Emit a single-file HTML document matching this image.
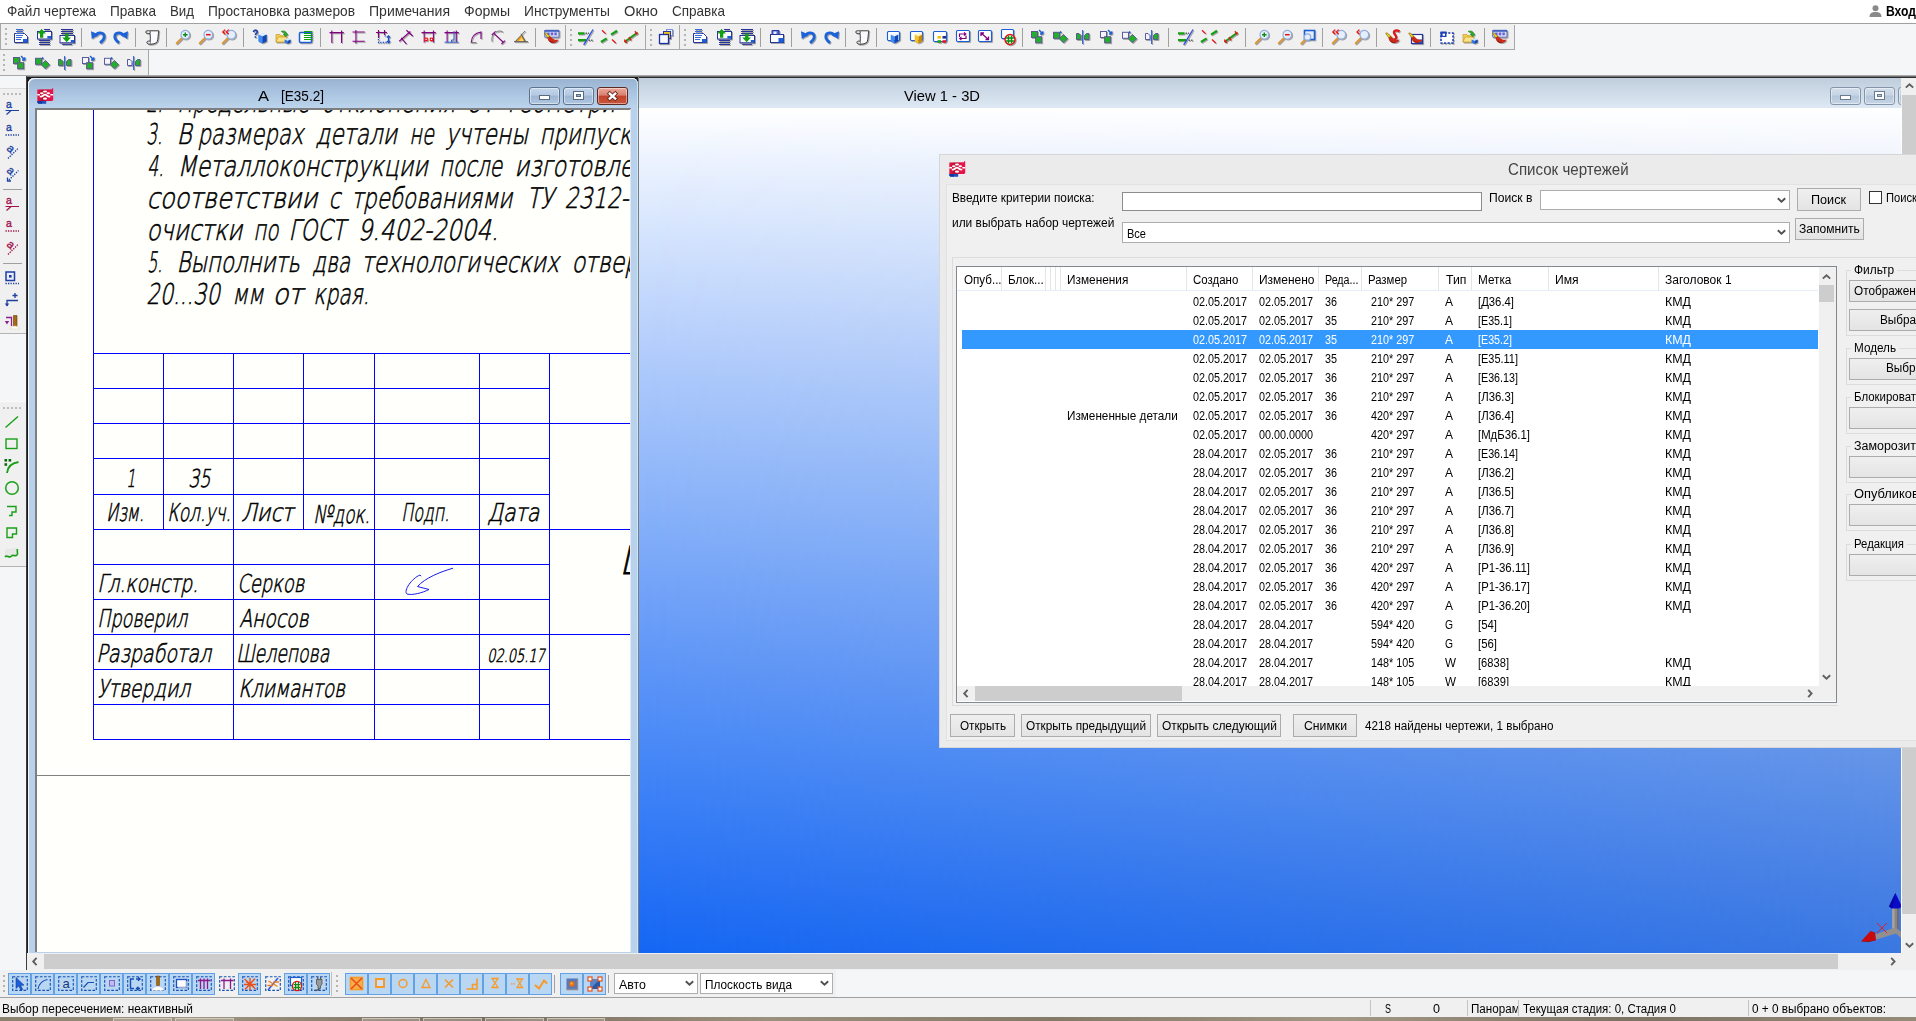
<!DOCTYPE html>
<html lang="ru"><head><meta charset="utf-8"><title>Tekla Structures</title>
<style>
html,body{margin:0;padding:0}
html{overflow:hidden;width:1916px;height:1021px}
body{width:1916px;height:1021px;overflow:hidden;position:relative;background:#f5f6f7;font-family:"Liberation Sans",sans-serif;font-size:12px;color:#000}
.t{position:absolute;white-space:pre}
.a{position:absolute}
svg{position:absolute;overflow:visible}

.ic{filter:drop-shadow(1px 1px .5px rgba(70,70,70,.45))}
.sep{position:absolute;width:1px;background:#a0a0a0}
.grip{position:absolute;width:2px;background-image:repeating-linear-gradient(180deg,#b4b4b4 0 2px,transparent 2px 5px);}
.btn{position:absolute;box-sizing:border-box;border:1px solid #acacac;background:linear-gradient(180deg,#efefef,#e4e4e4);}
.inp{position:absolute;box-sizing:border-box;border:1px solid #7a7a7a;background:#fff}
.grp{position:absolute;box-sizing:border-box;border:1px solid #dcdcdc}

</style></head><body>
<div style="position:absolute;left:0px;top:0px;width:1916px;height:23px;background:#fff"></div>
<div style="position:absolute;left:0px;top:23px;width:1916px;height:1px;background:#a0a0a0"></div>
<div class="t" style="left:7px;top:2.0px;line-height:19px;font:normal normal 15px 'Liberation Sans', sans-serif;transform:scaleX(0.9038);transform-origin:0 50%;color:#333;">Файл чертежа</div>
<div class="t" style="left:110px;top:2.0px;line-height:19px;font:normal normal 15px 'Liberation Sans', sans-serif;transform:scaleX(0.9078);transform-origin:0 50%;color:#333;">Правка</div>
<div class="t" style="left:170px;top:2.0px;line-height:19px;font:normal normal 15px 'Liberation Sans', sans-serif;transform:scaleX(0.8843);transform-origin:0 50%;color:#333;">Вид</div>
<div class="t" style="left:208px;top:2.0px;line-height:19px;font:normal normal 15px 'Liberation Sans', sans-serif;transform:scaleX(0.9146);transform-origin:0 50%;color:#333;">Простановка размеров</div>
<div class="t" style="left:369px;top:2.0px;line-height:19px;font:normal normal 15px 'Liberation Sans', sans-serif;transform:scaleX(0.9352);transform-origin:0 50%;color:#333;">Примечания</div>
<div class="t" style="left:464px;top:2.0px;line-height:19px;font:normal normal 15px 'Liberation Sans', sans-serif;transform:scaleX(0.9352);transform-origin:0 50%;color:#333;">Формы</div>
<div class="t" style="left:524px;top:2.0px;line-height:19px;font:normal normal 15px 'Liberation Sans', sans-serif;transform:scaleX(0.9195);transform-origin:0 50%;color:#333;">Инструменты</div>
<div class="t" style="left:624px;top:2.0px;line-height:19px;font:normal normal 15px 'Liberation Sans', sans-serif;transform:scaleX(0.9753);transform-origin:0 50%;color:#333;">Окно</div>
<div class="t" style="left:672px;top:2.0px;line-height:19px;font:normal normal 15px 'Liberation Sans', sans-serif;transform:scaleX(0.9007);transform-origin:0 50%;color:#333;">Справка</div>
<svg style="left:1869px;top:5px" width="13" height="12" viewBox="0 0 13 12"><circle cx="6.5" cy="3.2" r="3" fill="#8a8a8a"/><path d="M0.5 12 C0.5 8 3 7 6.5 7 S12.5 8 12.5 12Z" fill="#8a8a8a"/></svg>
<div class="t" style="left:1886px;top:2.0px;line-height:19px;font:normal bold 15px 'Liberation Sans', sans-serif;transform:scaleX(0.8088);transform-origin:0 50%;color:#000;">Вход</div>
<div style="position:absolute;left:0px;top:24px;width:1514px;height:26px;background:#f0f0f0"></div>
<div style="position:absolute;left:0px;top:49px;width:1515px;height:1px;background:#a8a8a8"></div>
<div style="position:absolute;left:0px;top:24px;width:1px;height:25px;background:#a8a8a8"></div>
<div style="position:absolute;left:1514px;top:25px;width:1px;height:25px;background:#a8a8a8"></div>
<div style="position:absolute;left:0px;top:50px;width:148px;height:26px;background:#f0f0f0"></div>
<div style="position:absolute;left:148px;top:50px;width:1px;height:26px;background:#a8a8a8"></div>
<div style="position:absolute;left:0px;top:75px;width:1916px;height:1px;background:#a8a8a8"></div>
<div style="position:absolute;left:26px;top:76px;width:1890px;height:1px;background:#6e6e6e"></div>
<div style="position:absolute;left:26px;top:77px;width:1890px;height:1px;background:#2e2e2e"></div>
<div class="grip" style="left:5px;top:28px;height:19px"></div>
<svg class="ic" style="left:13px;top:29px" width="16" height="16" viewBox="0 0 16 16"><path d="M3 0.5H10M3 2.5H10" stroke="#3a6ad8" stroke-width="1"/><path d="M1.5 4.5H11.5L14.5 7.5V13.5H1.5Z" fill="#fff" stroke="#27349a"/><path d="M3 4.5H10M3 6.5H10M3 8.5H9M3 10.5H8" stroke="#3a6ad8" stroke-width="1"/><rect x="10" y="10" width="4.5" height="3.5" fill="#1c5ed6"/></svg>
<svg class="ic" style="left:36px;top:29px" width="16" height="16" viewBox="0 0 16 16"><path d="M8 0.5H14" stroke="#27349a"/><rect x="1.5" y="2.5" width="14" height="7.5" fill="#fff" stroke="#27349a"/><rect x="11.3" y="7" width="3.7" height="2.6" fill="#1c5ed6"/><path d="M3 11.5H14M3 13.5H14M3 15.5H14" stroke="#27349a" stroke-width="1"/><path d="M5.6 0 L10 4.4 H7.3 V8.8 H4 V4.4 H1.3Z" fill="#14a014"/></svg>
<svg class="ic" style="left:59px;top:29px" width="16" height="16" viewBox="0 0 16 16"><path d="M2 0.5H14M2 2.5H14M2 4.5H14M3 15.4H13" stroke="#27349a" stroke-width="1"/><rect x="1" y="6.5" width="14.5" height="7.3" fill="#fff" stroke="#27349a"/><rect x="11.8" y="11" width="3.4" height="2.5" fill="#1c5ed6"/><path d="M7.7 13.2 L12 8.5 H9.5 V4.4 H6.1 V8.5 H3.3Z" fill="#14a014"/></svg>
<div class="sep" style="left:81px;top:28px;height:19px"></div>
<svg class="ic" style="left:90px;top:29px" width="16" height="16" viewBox="0 0 16 16"><path d="M5.6 7.2 C7 2.6 14.4 2.6 14.2 8 C14.1 10.6 12 12.4 10 13.8" fill="none" stroke="#1c62d8" stroke-width="2.8"/><path d="M1 2.2 L8.8 5.6 L1.8 10Z" fill="#1c62d8"/></svg>
<svg class="ic" style="left:113px;top:29px" width="16" height="16" viewBox="0 0 16 16"><g transform="translate(16 0) scale(-1 1)"><path d="M5.6 7.2 C7 2.6 14.4 2.6 14.2 8 C14.1 10.6 12 12.4 10 13.8" fill="none" stroke="#1c62d8" stroke-width="2.8"/><path d="M1 2.2 L8.8 5.6 L1.8 10Z" fill="#1c62d8"/></g></svg>
<div class="sep" style="left:135px;top:28px;height:19px"></div>
<svg class="ic" style="left:144px;top:29px" width="16" height="16" viewBox="0 0 16 16"><path d="M5.5 1.8 H14.8 C14 5.5 14.3 10 13.2 12.6 C11.8 15 8.5 15.2 5.8 15.2 C6.6 12 6.3 6 6 4.2 C4 4.6 1.6 4.4 1.6 3 C1.6 1.8 4 1.7 5.5 1.8Z" fill="#fafbff" stroke="#3c3c3c" stroke-width="1"/><path d="M6.1 12.4 C5 11.8 3.2 12 2.8 13.2 C2.8 14.8 4.8 15.2 5.8 15.2" fill="#e8e8ee" stroke="#3c3c3c" stroke-width="1"/><path d="M6 4.2 C6.6 3.6 6.4 2.4 5.5 1.8" fill="none" stroke="#3c3c3c" stroke-width=".9"/></svg>
<div class="sep" style="left:166px;top:28px;height:19px"></div>
<svg class="ic" style="left:175px;top:29px" width="16" height="16" viewBox="0 0 16 16"><path d="M7.3 8.8 L1.8 14.3" stroke="#d9963a" stroke-width="2.2" stroke-linecap="round"/><circle cx="10.3" cy="5.7" r="4.3" fill="#e4effc" stroke="#93aede" stroke-width="1.2"/><path d="M8 5.7H12.6M10.3 3.4V8" stroke="#108a10" stroke-width="1.4"/></svg>
<svg class="ic" style="left:198px;top:29px" width="16" height="16" viewBox="0 0 16 16"><path d="M7.3 8.8 L1.8 14.3" stroke="#d9963a" stroke-width="2.2" stroke-linecap="round"/><circle cx="10.3" cy="5.7" r="4.3" fill="#e4effc" stroke="#93aede" stroke-width="1.2"/><path d="M8 5.7H12.6" stroke="#e01010" stroke-width="1.5"/></svg>
<svg class="ic" style="left:221px;top:29px" width="16" height="16" viewBox="0 0 16 16"><path d="M7.3 8.8 L1.8 14.3" stroke="#d9963a" stroke-width="2.2" stroke-linecap="round"/><circle cx="10.3" cy="5.7" r="4.3" fill="#e4effc" stroke="#93aede" stroke-width="1.2"/><path d="M4.2 0.6L1.8 2.9L4.2 5.2M7.8 0.6L5.4 2.9L7.8 5.2" stroke="#f01010" stroke-width="1.3" fill="none"/></svg>
<div class="sep" style="left:243px;top:28px;height:19px"></div>
<svg class="ic" style="left:252px;top:29px" width="16" height="16" viewBox="0 0 16 16"><path d="M1.5 3 C1.5 0.6 5.3 0.6 5.3 2.8 C5.3 4.4 3.4 4.4 3.4 6" fill="none" stroke="#1c3fa8" stroke-width="1.6"/><rect x="2.6" y="7.2" width="1.6" height="1.6" fill="#1c3fa8"/><path d="M10.5 3.3999999999999995 L14.7 5.5 L10.5 7.6 L6.3 5.5Z" fill="#dcebff"/><path d="M6.3 5.5 L10.5 7.6 L10.5 14.6 L6.3 12.5Z" fill="#3d8af2"/><path d="M14.7 5.5 L10.5 7.6 L10.5 14.6 L14.7 12.5Z" fill="#0f45b8"/></svg>
<svg class="ic" style="left:275px;top:29px" width="16" height="16" viewBox="0 0 16 16"><path d="M1 5.5 H5 L6 6.8 H10.5 V13 H1Z" fill="#f4cf58" stroke="#c89a20" stroke-width=".7"/><path d="M1 13 L3 8 H12 L10.5 13Z" fill="#fbe38a" stroke="#c89a20" stroke-width=".7"/><path d="M6 2.5 C9 1 11.5 2.5 11.5 5 L13 5 L10.6 7.8 L8.2 5 L9.8 5 C9.6 3.6 8 3 6 2.5Z" fill="#2bb02b" stroke="#0e7a0e" stroke-width=".5"/><path d="M12.6 9.0 L15.6 10.5 L12.6 12 L9.6 10.5Z" fill="#cfe4ff"/><path d="M9.6 10.5 L12.6 12 L12.6 15 L9.6 13.5Z" fill="#2a78ee"/><path d="M15.6 10.5 L12.6 12 L12.6 15 L15.6 13.5Z" fill="#0f45b8"/></svg>
<svg class="ic" style="left:298px;top:29px" width="16" height="16" viewBox="0 0 16 16"><rect x="1.5" y="3.5" width="12" height="10" rx="1" fill="#fff" stroke="#1c5ed6" stroke-width="1.5"/><path d="M6 2.5H14.5M6 4.5H14.5M6 6.5H14.5M6 8.5H14.5M6 10.5H14.5" stroke="#12a012" stroke-width="1.1"/></svg>
<div class="sep" style="left:320px;top:28px;height:19px"></div>
<svg class="ic" style="left:329px;top:29px" width="16" height="16" viewBox="0 0 16 16"><path d="M2.8 1.5V14M12.5 1.5V14M0.5 3.6H14.8" stroke="#800080" stroke-width="1.05" fill="none"/></svg>
<svg class="ic" style="left:352px;top:29px" width="16" height="16" viewBox="0 0 16 16"><path d="M0.5 3H12.8M0.5 12.2H12.8M3.9 1V14.5" stroke="#800080" stroke-width="1.05" fill="none"/></svg>
<svg class="ic" style="left:375px;top:29px" width="16" height="16" viewBox="0 0 16 16"><path d="M3.5 1V9M9.5 1V6M1 3.5H12" stroke="#800080" stroke-width="1.1" fill="none"/><path d="M3.5 10V13.5H12" stroke="#1c4fc8" stroke-width="1.3" stroke-dasharray="1.3 1.3" fill="none"/><path d="M13.5 7V13M12 8.5L13.5 6.8L15 8.5M12 12L13.5 13.8L15 12" stroke="#1c4fc8" stroke-width="1.2" fill="none"/><path d="M9.5 7H12" stroke="#1c4fc8" stroke-width="1.2" stroke-dasharray="1.2 1.2"/></svg>
<svg class="ic" style="left:398px;top:29px" width="16" height="16" viewBox="0 0 16 16"><path d="M1.2 12.2L12.4 2.5M8.4 1.3L14.7 7M3.2 8.8L8.4 15" stroke="#800080" stroke-width="1.15" fill="none"/></svg>
<svg class="ic" style="left:421px;top:29px" width="16" height="16" viewBox="0 0 16 16"><path d="M3.2 1.5V13.5M12.4 1.5V13.5M0.5 3.6H14.8" stroke="#800080" stroke-width="1.05" fill="none"/><rect x="3.9" y="9.2" width="2.4" height="2.4" fill="#fff" stroke="#ee1010" stroke-width="1.1"/><rect x="9.3" y="9.2" width="2.4" height="2.4" fill="#fff" stroke="#ee1010" stroke-width="1.1"/></svg>
<svg class="ic" style="left:444px;top:29px" width="16" height="16" viewBox="0 0 16 16"><path d="M3.1 1.5V13M12.3 1.5V13M0.5 3.6H14.8" stroke="#800080" stroke-width="1.05" fill="none"/><path d="M0.5 13.2H14.5M7.5 13V11H10V2" stroke="#2a5fd0" stroke-width="1" fill="none"/></svg>
<svg class="ic" style="left:467px;top:29px" width="16" height="16" viewBox="0 0 16 16"><path d="M4.3 13.4C4.5 8 8 4 14 3V10" stroke="#800080" stroke-width="1.15" fill="none"/><path d="M3.5 13.6H9.5" stroke="#777" stroke-width="1"/></svg>
<svg class="ic" style="left:490px;top:29px" width="16" height="16" viewBox="0 0 16 16"><path d="M3.6 4.2L13.4 13.4M1.8 6L5.6 2.4M11.4 15L15 11.6" stroke="#800080" stroke-width="1.15" fill="none"/><path d="M2 12.5C1.5 8.5 2.5 6 4 4.6M6 3C8.5 1.6 11 1.8 13 3" stroke="#777" stroke-width="1" fill="none"/></svg>
<svg class="ic" style="left:513px;top:29px" width="16" height="16" viewBox="0 0 16 16"><path d="M2.5 12.2L8.8 5.9L12.2 12.2Z" fill="#ee9a18"/><path d="M5.5 12.2L8.8 8.6L10.6 12.2Z" fill="#fbd868"/><path d="M1 12.7H15M2 12.8L12.2 2M8 4.8L12.6 12.8" stroke="#5a5a5a" stroke-width="1" fill="none"/></svg>
<div class="sep" style="left:535px;top:28px;height:19px"></div>
<svg class="ic" style="left:544px;top:29px" width="16" height="16" viewBox="0 0 16 16"><rect x="0.7" y="1.2" width="14.3" height="7" rx=".8" fill="#d4daf4" stroke="#6a7ab8" stroke-width="1.1"/><path d="M0.7 2H15" stroke="#2a50c0" stroke-width="1.4"/><path d="M3.2 3.6H5.6V6.2H3.2ZM6.8 3.6H9.2V6.2H6.8ZM10.4 3.6H12.8V6.2H10.4Z" fill="#6a60d8"/><path d="M3.4 8.6 C4 13 8 15 11.5 13.6 C13 12.9 14 11.9 14.6 10.5 C12.5 11.2 10 10.8 8.5 9.6 C7.4 8.7 6.4 7.6 5.6 6.8Z" fill="#cc2a1a"/><path d="M4 10.6 C5.5 13.8 9 14.8 12 13.3 C9 13.9 6 12.8 4 10.6Z" fill="#8a100a"/><path d="M0.6 4.2 L2 3.8 L5.8 7.2 L3.8 8.8Z" fill="#f4dc10" stroke="#5a4600" stroke-width=".5"/></svg>
<div class="sep" style="left:565px;top:25px;height:24px;background:#a8a8a8"></div>
<div class="grip" style="left:570px;top:29px;height:19px"></div>
<svg class="ic" style="left:577px;top:29px" width="16" height="16" viewBox="0 0 16 16"><path d="M1 4.3H7.5M1 11.2H9" stroke="#12a012" stroke-width="2.3"/><path d="M6.7 15.8 L16 0.5" stroke="#2a4fe0" stroke-width="1.3"/><path d="M8.5 4.3H12M11.5 11.2H15.5" stroke="#666" stroke-width="1.6" stroke-dasharray="1.5 1"/></svg>
<svg class="ic" style="left:600px;top:29px" width="16" height="16" viewBox="0 0 16 16"><path d="M2 1.3L5.5 4.6M12 10.5L15.7 14" stroke="#e81818" stroke-width="1.2"/><path d="M1 13L6.7 9.3M11 5.6L17 1.8" stroke="#12a012" stroke-width="2.2"/></svg>
<svg class="ic" style="left:623px;top:29px" width="16" height="16" viewBox="0 0 16 16"><path d="M1.5 13 L14.5 3.5" stroke="#12a012" stroke-width="2"/><path d="M1.5 10.5L3.5 14M6 8L8 11.3M12 2L14 5.5" stroke="#e81818" stroke-width="1.3"/><circle cx="2.5" cy="12.3" r="1.2" fill="#e81818"/><circle cx="13.3" cy="4.3" r="1.2" fill="#e81818"/><circle cx="7" cy="9.5" r="1" fill="#e81818"/></svg>
<div class="sep" style="left:645px;top:25px;height:24px;background:#a8a8a8"></div>
<div class="grip" style="left:650px;top:29px;height:19px"></div>
<svg class="ic" style="left:658px;top:29px" width="16" height="16" viewBox="0 0 16 16"><rect x="8.5" y="0.5" width="6" height="6" fill="#e8eefc" stroke="#7a90d8"/><rect x="5.5" y="2.5" width="7" height="7" fill="#f2c21a" stroke="#2a3a9a"/><rect x="1.5" y="5.5" width="9" height="9" fill="#f6f8ff" stroke="#1c2f9a" stroke-width="1.3"/></svg>
<div class="sep" style="left:679px;top:25px;height:24px;background:#a8a8a8"></div>
<div class="grip" style="left:684px;top:29px;height:19px"></div>
<svg class="ic" style="left:692px;top:29px" width="16" height="16" viewBox="0 0 16 16"><path d="M3 0.5H10M3 2.5H10" stroke="#3a6ad8" stroke-width="1"/><path d="M1.5 4.5H11.5L14.5 7.5V13.5H1.5Z" fill="#fff" stroke="#27349a"/><path d="M3 4.5H10M3 6.5H10M3 8.5H9M3 10.5H8" stroke="#3a6ad8" stroke-width="1"/><rect x="10" y="10" width="4.5" height="3.5" fill="#1c5ed6"/></svg>
<svg class="ic" style="left:716px;top:29px" width="16" height="16" viewBox="0 0 16 16"><path d="M8 0.5H14" stroke="#27349a"/><rect x="1.5" y="2.5" width="14" height="7.5" fill="#fff" stroke="#27349a"/><rect x="11.3" y="7" width="3.7" height="2.6" fill="#1c5ed6"/><path d="M3 11.5H14M3 13.5H14M3 15.5H14" stroke="#27349a" stroke-width="1"/><path d="M5.6 0 L10 4.4 H7.3 V8.8 H4 V4.4 H1.3Z" fill="#14a014"/></svg>
<svg class="ic" style="left:739px;top:29px" width="16" height="16" viewBox="0 0 16 16"><path d="M2 0.5H14M2 2.5H14M2 4.5H14M3 15.4H13" stroke="#27349a" stroke-width="1"/><rect x="1" y="6.5" width="14.5" height="7.3" fill="#fff" stroke="#27349a"/><rect x="11.8" y="11" width="3.4" height="2.5" fill="#1c5ed6"/><path d="M7.7 13.2 L12 8.5 H9.5 V4.4 H6.1 V8.5 H3.3Z" fill="#14a014"/></svg>
<div class="sep" style="left:760px;top:28px;height:19px"></div>
<svg class="ic" style="left:769px;top:29px" width="16" height="16" viewBox="0 0 16 16"><path d="M3 1.5H10V6.5H3Z" fill="#5a68d8" stroke="#27349a"/><rect x="4.5" y="2.5" width="3" height="3" fill="#e8ecff"/><rect x="1.5" y="5.5" width="13" height="8" fill="#fff" stroke="#27349a"/><rect x="9.5" y="9" width="5" height="4.5" fill="#1c5ed6"/></svg>
<div class="sep" style="left:791px;top:28px;height:19px"></div>
<svg class="ic" style="left:800px;top:29px" width="16" height="16" viewBox="0 0 16 16"><path d="M5.6 7.2 C7 2.6 14.4 2.6 14.2 8 C14.1 10.6 12 12.4 10 13.8" fill="none" stroke="#1c62d8" stroke-width="2.8"/><path d="M1 2.2 L8.8 5.6 L1.8 10Z" fill="#1c62d8"/></svg>
<svg class="ic" style="left:824px;top:29px" width="16" height="16" viewBox="0 0 16 16"><g transform="translate(16 0) scale(-1 1)"><path d="M5.6 7.2 C7 2.6 14.4 2.6 14.2 8 C14.1 10.6 12 12.4 10 13.8" fill="none" stroke="#1c62d8" stroke-width="2.8"/><path d="M1 2.2 L8.8 5.6 L1.8 10Z" fill="#1c62d8"/></g></svg>
<div class="sep" style="left:845px;top:28px;height:19px"></div>
<svg class="ic" style="left:854px;top:29px" width="16" height="16" viewBox="0 0 16 16"><path d="M5.5 1.8 H14.8 C14 5.5 14.3 10 13.2 12.6 C11.8 15 8.5 15.2 5.8 15.2 C6.6 12 6.3 6 6 4.2 C4 4.6 1.6 4.4 1.6 3 C1.6 1.8 4 1.7 5.5 1.8Z" fill="#fafbff" stroke="#3c3c3c" stroke-width="1"/><path d="M6.1 12.4 C5 11.8 3.2 12 2.8 13.2 C2.8 14.8 4.8 15.2 5.8 15.2" fill="#e8e8ee" stroke="#3c3c3c" stroke-width="1"/><path d="M6 4.2 C6.6 3.6 6.4 2.4 5.5 1.8" fill="none" stroke="#3c3c3c" stroke-width=".9"/></svg>
<div class="sep" style="left:876px;top:28px;height:19px"></div>
<svg class="ic" style="left:886px;top:29px" width="16" height="16" viewBox="0 0 16 16"><rect x="1.5" y="2.5" width="12" height="9" rx="1" fill="#fff" stroke="#1c5ed6" stroke-width="1.15"/><path d="M8.5 3.7 L12.3 5.6 L8.5 7.5 L4.7 5.6Z" fill="#eef5ff"/><path d="M4.7 5.6 L8.5 7.5 L8.5 14.5 L4.7 12.6Z" fill="#3d8af2"/><path d="M12.3 5.6 L8.5 7.5 L8.5 14.5 L12.3 12.6Z" fill="#0f45b8"/></svg>
<svg class="ic" style="left:909px;top:29px" width="16" height="16" viewBox="0 0 16 16"><rect x="1.5" y="2.5" width="12" height="9" rx="1" fill="#fff" stroke="#1c5ed6" stroke-width="1.15"/><path d="M9.5 3.7 L13.3 5.6 L9.5 7.5 L5.7 5.6Z" fill="#fff6c8"/><path d="M5.7 5.6 L9.5 7.5 L9.5 14.5 L5.7 12.6Z" fill="#f5c02a"/><path d="M13.3 5.6 L9.5 7.5 L9.5 14.5 L13.3 12.6Z" fill="#c88a08"/></svg>
<svg class="ic" style="left:932px;top:29px" width="16" height="16" viewBox="0 0 16 16"><rect x="1.5" y="2.5" width="13" height="10" rx="1" fill="#fff" stroke="#1c5ed6" stroke-width="1.15"/><rect x="5.5" y="7" width="3.5" height="2.6" fill="#f2c000"/><rect x="10.5" y="7" width="3.5" height="2.6" fill="#1c2f9a"/><rect x="5.5" y="11.2" width="3.5" height="2.6" fill="#14a014"/><rect x="10.5" y="11.2" width="3.5" height="2.6" fill="#e8102a"/></svg>
<svg class="ic" style="left:955px;top:29px" width="16" height="16" viewBox="0 0 16 16"><rect x="1.5" y="1.5" width="13" height="11" rx="1" fill="#fff" stroke="#1c5ed6" stroke-width="1.15"/><path d="M4.5 8V5H10.5M9 3.4L10.8 5L9 6.6M11 6.5V9.5H5M6.5 7.9L4.7 9.5L6.5 11.1" stroke="#800080" stroke-width="1.2" fill="none"/></svg>
<svg class="ic" style="left:977px;top:29px" width="16" height="16" viewBox="0 0 16 16"><rect x="1.5" y="1.5" width="13" height="11" rx="1" fill="#fff" stroke="#1c5ed6" stroke-width="1.15"/><path d="M4 4 L11.5 10.5M4 7V4H7M8.5 10.5H11.5V7.5" stroke="#800080" stroke-width="1.3" fill="none"/></svg>
<svg class="ic" style="left:1000px;top:29px" width="16" height="16" viewBox="0 0 16 16"><rect x="1.5" y="0.5" width="12" height="9" rx="1" fill="#fff" stroke="#1c5ed6" stroke-width="1.15"/><circle cx="10" cy="10.5" r="5" fill="#fff" stroke="#e01010" stroke-width="1.4"/><path d="M6 9H14M6 12H14M8.5 6.5V14.5M11.5 6.5V14.5" stroke="#108a10" stroke-width="1.5"/></svg>
<div class="sep" style="left:1022px;top:28px;height:19px"></div>
<svg class="ic" style="left:1031px;top:29px" width="16" height="16" viewBox="0 0 16 16"><rect x="0.5" y="2.5" width="6" height="6" fill="#22b02a" stroke="#5a5a8c" stroke-width="1"/><rect x="4.6" y="7.7" width="6" height="6" fill="#22b02a" stroke="#5a5a8c" stroke-width="1"/><path d="M8 1 L11.6 4.8 M11.8 5 L11.8 2.2 M11.8 5 L9 5" stroke="#1c5ed6" stroke-width="1.3" fill="none"/></svg>
<svg class="ic" style="left:1054px;top:29px" width="16" height="16" viewBox="0 0 16 16"><rect x="-0.5" y="3.3" width="6" height="6" fill="#22b02a" stroke="#5a5a8c" stroke-width="1"/><path d="M9.4 5.3999999999999995 L13.600000000000001 9.6 L9.4 13.8 L5.2 9.6Z" fill="#22b02a" stroke="#5a5a8c" stroke-width="1"/><path d="M6 1.8L8 3.2L6 4.6Z" fill="#1c5ed6"/></svg>
<svg class="ic" style="left:1077px;top:29px" width="16" height="16" viewBox="0 0 16 16"><path d="M-0.5 4.5H2L4 6.5V10.5H-0.5Z" fill="#22b02a" stroke="#5a5a8c"/><path d="M12 4.5H9.5L7.5 6.5V10.5H12Z" fill="#22b02a" stroke="#5a5a8c"/><path d="M5.6 1V15" stroke="#2a60e0" stroke-width="1.1"/></svg>
<svg class="ic" style="left:1100px;top:29px" width="16" height="16" viewBox="0 0 16 16"><rect x="0.5" y="2.5" width="6" height="6" fill="#f4f4fa" stroke="#5a5a9c" stroke-width="1"/><rect x="4.6" y="7.7" width="6" height="6" fill="#22b02a" stroke="#5a5a8c" stroke-width="1"/><path d="M8 1 L11.6 4.8 M11.8 5 L11.8 2.2 M11.8 5 L9 5" stroke="#1c5ed6" stroke-width="1.3" fill="none"/></svg>
<svg class="ic" style="left:1123px;top:29px" width="16" height="16" viewBox="0 0 16 16"><rect x="-0.5" y="3.3" width="6" height="6" fill="#f4f4fa" stroke="#5a5a9c" stroke-width="1"/><path d="M9.4 5.3999999999999995 L13.600000000000001 9.6 L9.4 13.8 L5.2 9.6Z" fill="#22b02a" stroke="#5a5a8c" stroke-width="1"/><path d="M6 1.8L8 3.2L6 4.6Z" fill="#1c5ed6"/></svg>
<svg class="ic" style="left:1146px;top:29px" width="16" height="16" viewBox="0 0 16 16"><path d="M-0.5 4.5H2L4 6.5V10.5H-0.5Z" fill="#f4f4fa" stroke="#5a5a9c"/><path d="M12 4.5H9.5L7.5 6.5V10.5H12Z" fill="#22b02a" stroke="#5a5a8c"/><path d="M5.6 1V15" stroke="#2a60e0" stroke-width="1.1"/></svg>
<div class="sep" style="left:1168px;top:28px;height:19px"></div>
<svg class="ic" style="left:1177px;top:29px" width="16" height="16" viewBox="0 0 16 16"><path d="M1 4.3H7.5M1 11.2H9" stroke="#12a012" stroke-width="2.3"/><path d="M6.7 15.8 L16 0.5" stroke="#2a4fe0" stroke-width="1.3"/><path d="M8.5 4.3H12M11.5 11.2H15.5" stroke="#666" stroke-width="1.6" stroke-dasharray="1.5 1"/></svg>
<svg class="ic" style="left:1200px;top:29px" width="16" height="16" viewBox="0 0 16 16"><path d="M2 1.3L5.5 4.6M12 10.5L15.7 14" stroke="#e81818" stroke-width="1.2"/><path d="M1 13L6.7 9.3M11 5.6L17 1.8" stroke="#12a012" stroke-width="2.2"/></svg>
<svg class="ic" style="left:1223px;top:29px" width="16" height="16" viewBox="0 0 16 16"><path d="M1.5 13 L14.5 3.5" stroke="#12a012" stroke-width="2"/><path d="M1.5 10.5L3.5 14M6 8L8 11.3M12 2L14 5.5" stroke="#e81818" stroke-width="1.3"/><circle cx="2.5" cy="12.3" r="1.2" fill="#e81818"/><circle cx="13.3" cy="4.3" r="1.2" fill="#e81818"/><circle cx="7" cy="9.5" r="1" fill="#e81818"/></svg>
<div class="sep" style="left:1245px;top:28px;height:19px"></div>
<svg class="ic" style="left:1254px;top:29px" width="16" height="16" viewBox="0 0 16 16"><path d="M7.3 8.8 L1.8 14.3" stroke="#d9963a" stroke-width="2.2" stroke-linecap="round"/><circle cx="10.3" cy="5.7" r="4.3" fill="#e4effc" stroke="#93aede" stroke-width="1.2"/><path d="M8 5.7H12.6M10.3 3.4V8" stroke="#108a10" stroke-width="1.4"/></svg>
<svg class="ic" style="left:1277px;top:29px" width="16" height="16" viewBox="0 0 16 16"><path d="M7.3 8.8 L1.8 14.3" stroke="#d9963a" stroke-width="2.2" stroke-linecap="round"/><circle cx="10.3" cy="5.7" r="4.3" fill="#e4effc" stroke="#93aede" stroke-width="1.2"/><path d="M8 5.7H12.6" stroke="#e01010" stroke-width="1.5"/></svg>
<svg class="ic" style="left:1300px;top:29px" width="16" height="16" viewBox="0 0 16 16"><rect x="4.5" y="1.5" width="10" height="9" fill="#e4ecfa" stroke="#1c5ed6" stroke-width="1.6"/><path d="M5.5 10.5 L1.5 14.5" stroke="#d9963a" stroke-width="2.2" stroke-linecap="round"/><circle cx="7.5" cy="8" r="3.2" fill="#e4effc" stroke="#93aede" stroke-width="1.2"/></svg>
<div class="sep" style="left:1322px;top:28px;height:19px"></div>
<svg class="ic" style="left:1331px;top:29px" width="16" height="16" viewBox="0 0 16 16"><path d="M7.3 8.8 L1.8 14.3" stroke="#d9963a" stroke-width="2.2" stroke-linecap="round"/><circle cx="10.3" cy="5.7" r="4.3" fill="#e4effc" stroke="#93aede" stroke-width="1.2"/><path d="M4.2 0.6L1.8 2.9L4.2 5.2M7.8 0.6L5.4 2.9L7.8 5.2" stroke="#f01010" stroke-width="1.3" fill="none"/></svg>
<svg class="ic" style="left:1354px;top:29px" width="16" height="16" viewBox="0 0 16 16"><path d="M7.3 8.8 L1.8 14.3" stroke="#d9963a" stroke-width="2.2" stroke-linecap="round"/><circle cx="10.3" cy="5.7" r="4.3" fill="#e4effc" stroke="#93aede" stroke-width="1.2"/><path d="M5.4 0.6L3 2.9L5.4 5.2" stroke="#f01010" stroke-width="1.3" fill="none"/></svg>
<div class="sep" style="left:1376px;top:28px;height:19px"></div>
<svg class="ic" style="left:1385px;top:29px" width="16" height="16" viewBox="0 0 16 16"><path d="M14.5 2.5 C11 0 7.5 2 9.5 5 C11.5 7.5 12.5 9 9 11" fill="none" stroke="#e01414" stroke-width="2.2"/><path d="M3.4 8.6 C4 13 8 15 11.5 13.6 C13 12.9 14 11.9 14.6 10.5 C12.5 11.2 10 10.8 8.5 9.6 C7.4 8.7 6.4 7.6 5.6 6.8Z" fill="#cc2a1a"/><path d="M4 10.6 C5.5 13.8 9 14.8 12 13.3 C9 13.9 6 12.8 4 10.6Z" fill="#8a100a"/><path d="M0.6 4.2 L2 3.8 L5.8 7.2 L3.8 8.8Z" fill="#f4dc10" stroke="#5a4600" stroke-width=".5"/></svg>
<svg class="ic" style="left:1408px;top:29px" width="16" height="16" viewBox="0 0 16 16"><rect x="3.5" y="5.5" width="11" height="9" fill="#fff" stroke="#27349a" stroke-width="1.2"/><rect x="10" y="10.5" width="4" height="3.5" fill="#1c5ed6"/><path d="M3.4 8.6 C4 13 8 15 11.5 13.6 C13 12.9 14 11.9 14.6 10.5 C12.5 11.2 10 10.8 8.5 9.6 C7.4 8.7 6.4 7.6 5.6 6.8Z" fill="#cc2a1a"/><path d="M4 10.6 C5.5 13.8 9 14.8 12 13.3 C9 13.9 6 12.8 4 10.6Z" fill="#8a100a"/><path d="M0.6 4.2 L2 3.8 L5.8 7.2 L3.8 8.8Z" fill="#f4dc10" stroke="#5a4600" stroke-width=".5"/></svg>
<div class="sep" style="left:1430px;top:28px;height:19px"></div>
<svg class="ic" style="left:1439px;top:29px" width="16" height="16" viewBox="0 0 16 16"><rect x="2" y="4" width="12" height="10" fill="#fff" stroke="#1c3fb8" stroke-width="1.6" stroke-dasharray="2.2 1.4"/><path d="M1.5 2.5H7.5V8H1.5Z" fill="#1c3fb8"/><rect x="3.6" y="4.6" width="2.4" height="2.2" fill="#fff"/></svg>
<svg class="ic" style="left:1462px;top:29px" width="16" height="16" viewBox="0 0 16 16"><path d="M1 5.5 H5 L6 6.8 H10.5 V13 H1Z" fill="#f4cf58" stroke="#c89a20" stroke-width=".7"/><path d="M1 13 L3 8 H12 L10.5 13Z" fill="#fbe38a" stroke="#c89a20" stroke-width=".7"/><path d="M6 2.5 C9 1 11.5 2.5 11.5 5 L13 5 L10.6 7.8 L8.2 5 L9.8 5 C9.6 3.6 8 3 6 2.5Z" fill="#2bb02b" stroke="#0e7a0e" stroke-width=".5"/><path d="M12.6 9.0 L15.6 10.5 L12.6 12 L9.6 10.5Z" fill="#cfe4ff"/><path d="M9.6 10.5 L12.6 12 L12.6 15 L9.6 13.5Z" fill="#2a78ee"/><path d="M15.6 10.5 L12.6 12 L12.6 15 L15.6 13.5Z" fill="#0f45b8"/></svg>
<div class="sep" style="left:1484px;top:28px;height:19px"></div>
<svg class="ic" style="left:1492px;top:29px" width="16" height="16" viewBox="0 0 16 16"><rect x="0.7" y="1.2" width="14.3" height="7" rx=".8" fill="#d4daf4" stroke="#6a7ab8" stroke-width="1.1"/><path d="M0.7 2H15" stroke="#2a50c0" stroke-width="1.4"/><path d="M3.2 3.6H5.6V6.2H3.2ZM6.8 3.6H9.2V6.2H6.8ZM10.4 3.6H12.8V6.2H10.4Z" fill="#6a60d8"/><path d="M3.4 8.6 C4 13 8 15 11.5 13.6 C13 12.9 14 11.9 14.6 10.5 C12.5 11.2 10 10.8 8.5 9.6 C7.4 8.7 6.4 7.6 5.6 6.8Z" fill="#cc2a1a"/><path d="M4 10.6 C5.5 13.8 9 14.8 12 13.3 C9 13.9 6 12.8 4 10.6Z" fill="#8a100a"/><path d="M0.6 4.2 L2 3.8 L5.8 7.2 L3.8 8.8Z" fill="#f4dc10" stroke="#5a4600" stroke-width=".5"/></svg>
<div class="grip" style="left:3px;top:54px;height:19px"></div>
<svg class="ic" style="left:13px;top:55px" width="16" height="16" viewBox="0 0 16 16"><rect x="0.5" y="2.5" width="6" height="6" fill="#22b02a" stroke="#5a5a8c" stroke-width="1"/><rect x="4.6" y="7.7" width="6" height="6" fill="#22b02a" stroke="#5a5a8c" stroke-width="1"/><path d="M8 1 L11.6 4.8 M11.8 5 L11.8 2.2 M11.8 5 L9 5" stroke="#1c5ed6" stroke-width="1.3" fill="none"/></svg>
<svg class="ic" style="left:36px;top:55px" width="16" height="16" viewBox="0 0 16 16"><rect x="-0.5" y="3.3" width="6" height="6" fill="#22b02a" stroke="#5a5a8c" stroke-width="1"/><path d="M9.4 5.3999999999999995 L13.600000000000001 9.6 L9.4 13.8 L5.2 9.6Z" fill="#22b02a" stroke="#5a5a8c" stroke-width="1"/><path d="M6 1.8L8 3.2L6 4.6Z" fill="#1c5ed6"/></svg>
<svg class="ic" style="left:59px;top:55px" width="16" height="16" viewBox="0 0 16 16"><path d="M-0.5 4.5H2L4 6.5V10.5H-0.5Z" fill="#22b02a" stroke="#5a5a8c"/><path d="M12 4.5H9.5L7.5 6.5V10.5H12Z" fill="#22b02a" stroke="#5a5a8c"/><path d="M5.6 1V15" stroke="#2a60e0" stroke-width="1.1"/></svg>
<svg class="ic" style="left:82px;top:55px" width="16" height="16" viewBox="0 0 16 16"><rect x="0.5" y="2.5" width="6" height="6" fill="#f4f4fa" stroke="#5a5a9c" stroke-width="1"/><rect x="4.6" y="7.7" width="6" height="6" fill="#22b02a" stroke="#5a5a8c" stroke-width="1"/><path d="M8 1 L11.6 4.8 M11.8 5 L11.8 2.2 M11.8 5 L9 5" stroke="#1c5ed6" stroke-width="1.3" fill="none"/></svg>
<svg class="ic" style="left:105px;top:55px" width="16" height="16" viewBox="0 0 16 16"><rect x="-0.5" y="3.3" width="6" height="6" fill="#f4f4fa" stroke="#5a5a9c" stroke-width="1"/><path d="M9.4 5.3999999999999995 L13.600000000000001 9.6 L9.4 13.8 L5.2 9.6Z" fill="#22b02a" stroke="#5a5a8c" stroke-width="1"/><path d="M6 1.8L8 3.2L6 4.6Z" fill="#1c5ed6"/></svg>
<svg class="ic" style="left:128px;top:55px" width="16" height="16" viewBox="0 0 16 16"><path d="M-0.5 4.5H2L4 6.5V10.5H-0.5Z" fill="#f4f4fa" stroke="#5a5a9c"/><path d="M12 4.5H9.5L7.5 6.5V10.5H12Z" fill="#22b02a" stroke="#5a5a8c"/><path d="M5.6 1V15" stroke="#2a60e0" stroke-width="1.1"/></svg>
<div style="position:absolute;left:0px;top:88px;width:26px;height:246px;background:#f0f0f0"></div>
<div style="position:absolute;left:0px;top:402px;width:26px;height:164px;background:#f0f0f0"></div>
<div style="position:absolute;left:0px;top:333px;width:26px;height:1px;background:#b4b4b4"></div>
<div style="position:absolute;left:0px;top:566px;width:26px;height:1px;background:#b4b4b4"></div>
<div style="position:absolute;left:0px;top:88px;width:26px;height:1px;background:#dcdcdc"></div>
<div style="position:absolute;left:0px;top:401px;width:26px;height:1px;background:#fafafa"></div>
<div style="position:absolute;left:3px;top:93px;width:20px;height:2px;background-image:repeating-linear-gradient(90deg,#bcbcbc 0 2px,transparent 2px 4px)"></div>
<svg style="left:4px;top:100px" width="16" height="16" viewBox="0 0 16 16"><text x="2" y="8" style="font:normal 10.5px 'Liberation Sans',sans-serif" stroke="#1c3fa0" stroke-width=".35" fill="#1c3fa0">a</text><path d="M1.5 10.5H15M7 10.5L2.5 14.5" stroke="#1c3fa0" stroke-width="1.2" fill="none"/></svg>
<svg style="left:4px;top:122px" width="16" height="16" viewBox="0 0 16 16"><text x="2" y="9" style="font:normal 10.5px 'Liberation Sans',sans-serif" stroke="#1c3fa0" stroke-width=".35" fill="#1c3fa0">a</text><path d="M1.5 13H15" stroke="#1c3fa0" stroke-width="1.3" stroke-dasharray="1.3 1.2"/></svg>
<svg style="left:4px;top:144px" width="16" height="16" viewBox="0 0 16 16"><text x="2" y="9" style="font:normal 11.5px 'Liberation Sans',sans-serif" stroke="#1c3fa0" stroke-width=".35" fill="#1c3fa0" transform="rotate(42 7 7)">a</text><path d="M4 14.5L14.5 4" stroke="#1c3fa0" stroke-width="1.3" stroke-dasharray="1.3 1.2"/></svg>
<svg style="left:4px;top:166px" width="16" height="16" viewBox="0 0 16 16"><text x="2" y="9" style="font:normal 11.5px 'Liberation Sans',sans-serif" stroke="#1c3fa0" stroke-width=".35" fill="#1c3fa0" transform="rotate(42 7 7)">a</text><path d="M5 14L14.5 4.5" stroke="#1c3fa0" stroke-width="1.3" stroke-dasharray="1.3 1.2"/><path d="M3.5 11.5V15H7" stroke="#1c3fa0" stroke-width="1.3" fill="none"/></svg>
<div style="position:absolute;left:3px;top:189px;width:19px;height:1px;background:#a0a0a0"></div>
<svg style="left:4px;top:196px" width="16" height="16" viewBox="0 0 16 16"><text x="2" y="8" style="font:normal 10.5px 'Liberation Sans',sans-serif" stroke="#a0104a" stroke-width=".35" fill="#a0104a">a</text><path d="M1.5 10.5H15M7 10.5L2.5 14.5" stroke="#a0104a" stroke-width="1.2" fill="none"/></svg>
<svg style="left:4px;top:218px" width="16" height="16" viewBox="0 0 16 16"><text x="2" y="9" style="font:normal 10.5px 'Liberation Sans',sans-serif" stroke="#a0104a" stroke-width=".35" fill="#a0104a">a</text><path d="M1.5 13H15" stroke="#a0104a" stroke-width="1.3" stroke-dasharray="1.3 1.2"/></svg>
<svg style="left:4px;top:240px" width="16" height="16" viewBox="0 0 16 16"><text x="2" y="9" style="font:normal 11.5px 'Liberation Sans',sans-serif" stroke="#a0104a" stroke-width=".35" fill="#a0104a" transform="rotate(42 7 7)">a</text><path d="M4 14.5L14.5 4" stroke="#a0104a" stroke-width="1.3" stroke-dasharray="1.3 1.2"/></svg>
<div style="position:absolute;left:3px;top:263px;width:19px;height:1px;background:#a0a0a0"></div>
<svg style="left:4px;top:270px" width="16" height="16" viewBox="0 0 16 16"><rect x="2" y="2" width="8.5" height="8.5" fill="#e8ecfa" stroke="#1c3fa0" stroke-width="1.5"/><rect x="5" y="5" width="2.6" height="2.6" fill="#1c3fa0"/><path d="M1.5 13.5H15" stroke="#1c3fa0" stroke-width="1.3" stroke-dasharray="1.3 1.2"/></svg>
<svg style="left:4px;top:292px" width="16" height="16" viewBox="0 0 16 16"><path d="M3 14V8.5H14" stroke="#1c3fa0" stroke-width="1.3" fill="none"/><path d="M0.8 11.5L3 14.5L5.2 11.5Z" fill="#1c3fa0"/><path d="M8.5 3.5H13.5M11 1V6" stroke="#1c3fa0" stroke-width="1.3"/></svg>
<svg style="left:4px;top:314px" width="16" height="16" viewBox="0 0 16 16"><path d="M9.5 1.5H13V12.5H9.5Z" fill="#a86a10" stroke="#6a3c00" stroke-width=".6"/><path d="M6 15 C7 11 15 11 15.5 15Z" fill="#fffdf4" stroke="#d8d0b8" stroke-width=".5"/><path d="M2 3.5H7.5V12" stroke="#8c2090" stroke-width="1.3" fill="none"/><path d="M0.8 7L3 10.5L5.2 7Z" fill="#8c2090"/></svg>
<div style="position:absolute;left:3px;top:407px;width:20px;height:2px;background-image:repeating-linear-gradient(90deg,#bcbcbc 0 2px,transparent 2px 4px)"></div>
<svg style="left:4px;top:414px" width="16" height="16" viewBox="0 0 16 16"><path d="M1.5 13.5L14 2.5" stroke="#18a018" stroke-width="1.4"/></svg>
<svg style="left:4px;top:436px" width="16" height="16" viewBox="0 0 16 16"><rect x="2" y="3" width="11" height="9.5" fill="none" stroke="#18a018" stroke-width="1.4"/></svg>
<svg style="left:4px;top:458px" width="16" height="16" viewBox="0 0 16 16"><path d="M3 15C3.5 9 8 5 14.5 4" stroke="#18a018" stroke-width="1.8" fill="none"/><rect x="0.5" y="1" width="2.6" height="2.6" fill="#0a6a0a"/><rect x="4.6" y="1" width="2.6" height="2.6" fill="#0a6a0a"/><rect x="0.5" y="5.2" width="2.6" height="2.6" fill="#0a6a0a"/></svg>
<svg style="left:4px;top:480px" width="16" height="16" viewBox="0 0 16 16"><circle cx="8" cy="8" r="6.3" fill="none" stroke="#18a018" stroke-width="1.5"/></svg>
<svg style="left:4px;top:503px" width="16" height="16" viewBox="0 0 16 16"><path d="M3 3.5H12V9H8V12.5H5" stroke="#18a018" stroke-width="1.4" fill="none"/></svg>
<svg style="left:4px;top:525px" width="16" height="16" viewBox="0 0 16 16"><path d="M3 3H12.5V9H8.5V12.5H3Z" stroke="#18a018" stroke-width="1.4" fill="none"/></svg>
<svg style="left:4px;top:545px" width="16" height="16" viewBox="0 0 16 16"><path d="M1 5 C3 2 6 5 8 3.5 C10 2 13 3 13 5 V11 H1Z" fill="#e6e8e6"/><path d="M1 12 C3 9 5 14 7.5 11 C9 9 11 12 13 10 C14.5 8 12.5 6.5 13.5 4" stroke="#18a018" stroke-width="1.6" fill="none"/></svg>
<div style="position:absolute;left:26px;top:76px;width:613px;height:877px;background:#7c7c7c"></div>
<div style="position:absolute;left:27px;top:77px;width:611px;height:876px;background:#1c1c1c"></div>
<div style="position:absolute;left:28px;top:78px;width:610px;height:875px;background:#b9d1ea;border-radius:6px 6px 0 0;box-shadow:inset 1px 0 0 rgba(255,255,255,.85),inset -1px 0 0 rgba(200,240,255,.8)"></div>
<div style="position:absolute;left:28px;top:78px;width:610px;height:31px;background:linear-gradient(180deg,#98b2d0 0%,#a9c3e0 45%,#bdd5ed 100%);border-radius:6px 6px 0 0;box-shadow:inset 1px 1px 0 rgba(255,255,255,.85),inset -1px 0 0 rgba(200,240,255,.8)"></div>
<div style="position:absolute;left:35px;top:108px;width:596px;height:2px;background:#7e7e7e"></div>
<div style="position:absolute;left:35px;top:108px;width:2px;height:844px;background:#7e7e7e"></div>
<div style="position:absolute;left:630px;top:109px;width:1px;height:843px;background:#dfe9f5"></div>
<div class="t" style="left:258px;top:87.1px;line-height:19px;font:normal normal 15px 'Liberation Sans', sans-serif;transform:scaleX(1.0983);transform-origin:0 50%;color:#000;">A</div>
<div class="t" style="left:281px;top:87.1px;line-height:19px;font:normal normal 15px 'Liberation Sans', sans-serif;transform:scaleX(0.9044);transform-origin:0 50%;color:#000;">[E35.2]</div>
<div style="position:absolute;left:37px;top:110px;width:593px;height:842px;background:#fffffb;overflow:hidden"><div style="position:absolute;left:56px;top:-1px;width:1px;height:630px;background:#0000ff"></div>
<div style="position:absolute;left:56px;top:243px;width:538px;height:1px;background:#0000ff"></div>
<div style="position:absolute;left:56px;top:278px;width:457px;height:1px;background:#0000ff"></div>
<div style="position:absolute;left:56px;top:313px;width:538px;height:1px;background:#0000ff"></div>
<div style="position:absolute;left:56px;top:348px;width:457px;height:1px;background:#0000ff"></div>
<div style="position:absolute;left:56px;top:384px;width:457px;height:1px;background:#0000ff"></div>
<div style="position:absolute;left:56px;top:419px;width:538px;height:1px;background:#0000ff"></div>
<div style="position:absolute;left:56px;top:454px;width:457px;height:1px;background:#0000ff"></div>
<div style="position:absolute;left:56px;top:489px;width:457px;height:1px;background:#0000ff"></div>
<div style="position:absolute;left:56px;top:524px;width:538px;height:1px;background:#0000ff"></div>
<div style="position:absolute;left:56px;top:559px;width:457px;height:1px;background:#0000ff"></div>
<div style="position:absolute;left:56px;top:594px;width:457px;height:1px;background:#0000ff"></div>
<div style="position:absolute;left:56px;top:629px;width:538px;height:1px;background:#0000ff"></div>
<div style="position:absolute;left:126px;top:243px;width:1px;height:176px;background:#0000ff"></div>
<div style="position:absolute;left:266px;top:243px;width:1px;height:176px;background:#0000ff"></div>
<div style="position:absolute;left:196px;top:243px;width:1px;height:386px;background:#0000ff"></div>
<div style="position:absolute;left:337px;top:243px;width:1px;height:386px;background:#0000ff"></div>
<div style="position:absolute;left:442px;top:243px;width:1px;height:386px;background:#0000ff"></div>
<div style="position:absolute;left:512px;top:243px;width:1px;height:386px;background:#0000ff"></div>
<div style="position:absolute;left:0px;top:665px;width:594px;height:1px;background:#808080"></div>
<div class="t" style="left:109.3px;top:-24.1px;line-height:36px;font:normal 200 28.5px 'DejaVu Sans', sans-serif;-webkit-text-stroke:0.6px #000;transform:scaleX(0.6029) skewX(-15deg);transform-origin:0 27.9px;color:#000">2.</div>
<div class="t" style="left:139.7px;top:-24.1px;line-height:36px;font:normal 200 28.5px 'DejaVu Sans', sans-serif;-webkit-text-stroke:0.6px #000;transform:scaleX(0.7063) skewX(-15deg);transform-origin:0 27.9px;color:#000">Предельные</div>
<div class="t" style="left:283.5px;top:-24.1px;line-height:36px;font:normal 200 28.5px 'DejaVu Sans', sans-serif;-webkit-text-stroke:0.6px #000;transform:scaleX(0.7621) skewX(-15deg);transform-origin:0 27.9px;color:#000">отклонения</div>
<div class="t" style="left:429.2px;top:-24.1px;line-height:36px;font:normal 200 28.5px 'DejaVu Sans', sans-serif;-webkit-text-stroke:0.6px #000;transform:scaleX(0.8612) skewX(-15deg);transform-origin:0 27.9px;color:#000">от</div>
<div class="t" style="left:470.09999999999997px;top:-24.1px;line-height:36px;font:normal 200 28.5px 'DejaVu Sans', sans-serif;-webkit-text-stroke:0.6px #000;transform:scaleX(0.7693) skewX(-15deg);transform-origin:0 27.9px;color:#000">геометри</div>
<div class="t" style="left:588.2px;top:-24.1px;line-height:36px;font:normal 200 28.5px 'DejaVu Sans', sans-serif;-webkit-text-stroke:0.6px #000;transform:scaleX(0.7421) skewX(-15deg);transform-origin:0 27.9px;color:#000">ч</div>
<div class="t" style="left:109.3px;top:8.1px;line-height:36px;font:normal 200 28.5px 'DejaVu Sans', sans-serif;-webkit-text-stroke:0.6px #000;transform:scaleX(0.5918) skewX(-15deg);transform-origin:0 27.9px;color:#000">3.</div>
<div class="t" style="left:139.39999999999998px;top:8.1px;line-height:36px;font:normal 200 28.5px 'DejaVu Sans', sans-serif;-webkit-text-stroke:0.6px #000;transform:scaleX(0.8033) skewX(-15deg);transform-origin:0 27.9px;color:#000">В</div>
<div class="t" style="left:160.39999999999998px;top:8.1px;line-height:36px;font:normal 200 28.5px 'DejaVu Sans', sans-serif;-webkit-text-stroke:0.6px #000;transform:scaleX(0.7436) skewX(-15deg);transform-origin:0 27.9px;color:#000">размерах</div>
<div class="t" style="left:278.0px;top:8.1px;line-height:36px;font:normal 200 28.5px 'DejaVu Sans', sans-serif;-webkit-text-stroke:0.6px #000;transform:scaleX(0.7640) skewX(-15deg);transform-origin:0 27.9px;color:#000">детали</div>
<div class="t" style="left:372.2px;top:8.1px;line-height:36px;font:normal 200 28.5px 'DejaVu Sans', sans-serif;-webkit-text-stroke:0.6px #000;transform:scaleX(0.6746) skewX(-15deg);transform-origin:0 27.9px;color:#000">не</div>
<div class="t" style="left:407.59999999999997px;top:8.1px;line-height:36px;font:normal 200 28.5px 'DejaVu Sans', sans-serif;-webkit-text-stroke:0.6px #000;transform:scaleX(0.7687) skewX(-15deg);transform-origin:0 27.9px;color:#000">учтены</div>
<div class="t" style="left:501.7px;top:8.1px;line-height:36px;font:normal 200 28.5px 'DejaVu Sans', sans-serif;-webkit-text-stroke:0.6px #000;transform:scaleX(0.7444) skewX(-15deg);transform-origin:0 27.9px;color:#000">припуск</div>
<div class="t" style="left:110.3px;top:40.1px;line-height:36px;font:normal 200 28.5px 'DejaVu Sans', sans-serif;-webkit-text-stroke:0.6px #000;transform:scaleX(0.6029) skewX(-15deg);transform-origin:0 27.9px;color:#000">4.</div>
<div class="t" style="left:140.1px;top:40.1px;line-height:36px;font:normal 200 28.5px 'DejaVu Sans', sans-serif;-webkit-text-stroke:0.6px #000;transform:scaleX(0.7774) skewX(-15deg);transform-origin:0 27.9px;color:#000">Металлоконструкции</div>
<div class="t" style="left:402.2px;top:40.1px;line-height:36px;font:normal 200 28.5px 'DejaVu Sans', sans-serif;-webkit-text-stroke:0.6px #000;transform:scaleX(0.7177) skewX(-15deg);transform-origin:0 27.9px;color:#000">после</div>
<div class="t" style="left:476.7px;top:40.1px;line-height:36px;font:normal 200 28.5px 'DejaVu Sans', sans-serif;-webkit-text-stroke:0.6px #000;transform:scaleX(0.7873) skewX(-15deg);transform-origin:0 27.9px;color:#000">изготовле</div>
<div class="t" style="left:109.3px;top:72.1px;line-height:36px;font:normal 200 28.5px 'DejaVu Sans', sans-serif;-webkit-text-stroke:0.6px #000;transform:scaleX(0.8481) skewX(-15deg);transform-origin:0 27.9px;color:#000">соответствии</div>
<div class="t" style="left:291.4px;top:72.1px;line-height:36px;font:normal 200 28.5px 'DejaVu Sans', sans-serif;-webkit-text-stroke:0.6px #000;transform:scaleX(0.7466) skewX(-15deg);transform-origin:0 27.9px;color:#000">с</div>
<div class="t" style="left:314.09999999999997px;top:72.1px;line-height:36px;font:normal 200 28.5px 'DejaVu Sans', sans-serif;-webkit-text-stroke:0.6px #000;transform:scaleX(0.7493) skewX(-15deg);transform-origin:0 27.9px;color:#000">требованиями</div>
<div class="t" style="left:489.40000000000003px;top:72.1px;line-height:36px;font:normal 200 28.5px 'DejaVu Sans', sans-serif;-webkit-text-stroke:0.6px #000;transform:scaleX(0.7849) skewX(-15deg);transform-origin:0 27.9px;color:#000">ТУ</div>
<div class="t" style="left:526.7px;top:72.1px;line-height:36px;font:normal 200 28.5px 'DejaVu Sans', sans-serif;-webkit-text-stroke:0.6px #000;transform:scaleX(0.7727) skewX(-15deg);transform-origin:0 27.9px;color:#000">2312-</div>
<div class="t" style="left:109.3px;top:104.1px;line-height:36px;font:normal 200 28.5px 'DejaVu Sans', sans-serif;-webkit-text-stroke:0.6px #000;transform:scaleX(0.7988) skewX(-15deg);transform-origin:0 27.9px;color:#000">очистки</div>
<div class="t" style="left:216.2px;top:104.1px;line-height:36px;font:normal 200 28.5px 'DejaVu Sans', sans-serif;-webkit-text-stroke:0.6px #000;transform:scaleX(0.6957) skewX(-15deg);transform-origin:0 27.9px;color:#000">по</div>
<div class="t" style="left:251.3px;top:104.1px;line-height:36px;font:normal 200 28.5px 'DejaVu Sans', sans-serif;-webkit-text-stroke:0.6px #000;transform:scaleX(0.7511) skewX(-15deg);transform-origin:0 27.9px;color:#000">ГОСТ</div>
<div class="t" style="left:319.7px;top:104.1px;line-height:36px;font:normal 200 28.5px 'DejaVu Sans', sans-serif;-webkit-text-stroke:0.6px #000;transform:scaleX(0.8128) skewX(-15deg);transform-origin:0 27.9px;color:#000">9.402-2004.</div>
<div class="t" style="left:110.3px;top:136.1px;line-height:36px;font:normal 200 28.5px 'DejaVu Sans', sans-serif;-webkit-text-stroke:0.6px #000;transform:scaleX(0.5551) skewX(-15deg);transform-origin:0 27.9px;color:#000">5.</div>
<div class="t" style="left:139.39999999999998px;top:136.1px;line-height:36px;font:normal 200 28.5px 'DejaVu Sans', sans-serif;-webkit-text-stroke:0.6px #000;transform:scaleX(0.7509) skewX(-15deg);transform-origin:0 27.9px;color:#000">Выполнить</div>
<div class="t" style="left:274.7px;top:136.1px;line-height:36px;font:normal 200 28.5px 'DejaVu Sans', sans-serif;-webkit-text-stroke:0.6px #000;transform:scaleX(0.7051) skewX(-15deg);transform-origin:0 27.9px;color:#000">два</div>
<div class="t" style="left:324.09999999999997px;top:136.1px;line-height:36px;font:normal 200 28.5px 'DejaVu Sans', sans-serif;-webkit-text-stroke:0.6px #000;transform:scaleX(0.7685) skewX(-15deg);transform-origin:0 27.9px;color:#000">технологических</div>
<div class="t" style="left:533.5px;top:136.1px;line-height:36px;font:normal 200 28.5px 'DejaVu Sans', sans-serif;-webkit-text-stroke:0.6px #000;transform:scaleX(0.7868) skewX(-15deg);transform-origin:0 27.9px;color:#000">отвер</div>
<div class="t" style="left:109.3px;top:168.1px;line-height:36px;font:normal 200 28.5px 'DejaVu Sans', sans-serif;-webkit-text-stroke:0.6px #000;transform:scaleX(0.7361) skewX(-15deg);transform-origin:0 27.9px;color:#000">20...30</div>
<div class="t" style="left:194.5px;top:168.1px;line-height:36px;font:normal 200 28.5px 'DejaVu Sans', sans-serif;-webkit-text-stroke:0.6px #000;transform:scaleX(0.7230) skewX(-15deg);transform-origin:0 27.9px;color:#000">мм</div>
<div class="t" style="left:235.2px;top:168.1px;line-height:36px;font:normal 200 28.5px 'DejaVu Sans', sans-serif;-webkit-text-stroke:0.6px #000;transform:scaleX(0.9095) skewX(-15deg);transform-origin:0 27.9px;color:#000">от</div>
<div class="t" style="left:276.3px;top:168.1px;line-height:36px;font:normal 200 28.5px 'DejaVu Sans', sans-serif;-webkit-text-stroke:0.6px #000;transform:scaleX(0.7117) skewX(-15deg);transform-origin:0 27.9px;color:#000">края.</div>
<div class="t" style="left:88.8px;top:353.5px;line-height:31px;font:normal 200 24.61px 'DejaVu Sans', sans-serif;-webkit-text-stroke:0.6px #000;transform:scaleX(0.5743) skewX(-15deg);transform-origin:0 24.0px;color:#000">1</div>
<div class="t" style="left:150.5px;top:353.5px;line-height:31px;font:normal 200 24.61px 'DejaVu Sans', sans-serif;-webkit-text-stroke:0.6px #000;transform:scaleX(0.7118) skewX(-15deg);transform-origin:0 24.0px;color:#000">35</div>
<div class="t" style="left:69.3px;top:387.5px;line-height:31px;font:normal 200 24.61px 'DejaVu Sans', sans-serif;-webkit-text-stroke:0.6px #000;transform:scaleX(0.6486) skewX(-15deg);transform-origin:0 24.0px;color:#000">Изм.</div>
<div class="t" style="left:129.5px;top:387.5px;line-height:31px;font:normal 200 24.61px 'DejaVu Sans', sans-serif;-webkit-text-stroke:0.6px #000;transform:scaleX(0.6925) skewX(-15deg);transform-origin:0 24.0px;color:#000">Кол.уч.</div>
<div class="t" style="left:203.8px;top:387.5px;line-height:31px;font:normal 200 24.61px 'DejaVu Sans', sans-serif;-webkit-text-stroke:0.6px #000;transform:scaleX(0.8419) skewX(-15deg);transform-origin:0 24.0px;color:#000">Лист</div>
<div class="t" style="left:363.6px;top:387.5px;line-height:31px;font:normal 200 24.61px 'DejaVu Sans', sans-serif;-webkit-text-stroke:0.6px #000;transform:scaleX(0.6501) skewX(-15deg);transform-origin:0 24.0px;color:#000">Подп.</div>
<div class="t" style="left:450.1px;top:387.5px;line-height:31px;font:normal 200 24.61px 'DejaVu Sans', sans-serif;-webkit-text-stroke:0.6px #000;transform:scaleX(0.8299) skewX(-15deg);transform-origin:0 24.0px;color:#000">Дата</div>
<div class="t" style="left:275.8px;top:389.5px;line-height:31px;font:normal 200 24.61px 'DejaVu Sans', sans-serif;-webkit-text-stroke:0.6px #000;transform:scaleX(0.6846) skewX(-15deg);transform-origin:0 24.0px;color:#000">№док.</div>
<div class="t" style="left:60.3px;top:458.5px;line-height:31px;font:normal 200 24.61px 'DejaVu Sans', sans-serif;-webkit-text-stroke:0.6px #000;transform:scaleX(0.7557) skewX(-15deg);transform-origin:0 24.0px;color:#000">Гл.констр.</div>
<div class="t" style="left:199.8px;top:458.5px;line-height:31px;font:normal 200 24.61px 'DejaVu Sans', sans-serif;-webkit-text-stroke:0.6px #000;transform:scaleX(0.7279) skewX(-15deg);transform-origin:0 24.0px;color:#000">Серков</div>
<div class="t" style="left:59.7px;top:493.8px;line-height:31px;font:normal 200 24.61px 'DejaVu Sans', sans-serif;-webkit-text-stroke:0.6px #000;transform:scaleX(0.7133) skewX(-15deg);transform-origin:0 24.0px;color:#000">Проверил</div>
<div class="t" style="left:201.60000000000002px;top:493.8px;line-height:31px;font:normal 200 24.61px 'DejaVu Sans', sans-serif;-webkit-text-stroke:0.6px #000;transform:scaleX(0.7604) skewX(-15deg);transform-origin:0 24.0px;color:#000">Аносов</div>
<div class="t" style="left:58.8px;top:529.0px;line-height:31px;font:normal 200 24.61px 'DejaVu Sans', sans-serif;-webkit-text-stroke:0.6px #000;transform:scaleX(0.7751) skewX(-15deg);transform-origin:0 24.0px;color:#000">Разработал</div>
<div class="t" style="left:198.5px;top:529.0px;line-height:31px;font:normal 200 24.61px 'DejaVu Sans', sans-serif;-webkit-text-stroke:0.6px #000;transform:scaleX(0.7003) skewX(-15deg);transform-origin:0 24.0px;color:#000">Шелепова</div>
<div class="t" style="left:449.8px;top:535.2px;line-height:23px;font:normal 200 18.13px 'DejaVu Sans', sans-serif;-webkit-text-stroke:0.6px #000;transform:scaleX(0.7154) skewX(-15deg);transform-origin:0 17.8px;color:#000">02.05.17</div>
<div class="t" style="left:59.8px;top:564.3px;line-height:31px;font:normal 200 24.61px 'DejaVu Sans', sans-serif;-webkit-text-stroke:0.6px #000;transform:scaleX(0.7604) skewX(-15deg);transform-origin:0 24.0px;color:#000">Утвердил</div>
<div class="t" style="left:200.5px;top:564.3px;line-height:31px;font:normal 200 24.61px 'DejaVu Sans', sans-serif;-webkit-text-stroke:0.6px #000;transform:scaleX(0.7561) skewX(-15deg);transform-origin:0 24.0px;color:#000">Климантов</div>
<div class="t" style="left:582.3px;top:427.5px;line-height:49px;font:normal 200 38.86px 'DejaVu Sans', sans-serif;-webkit-text-stroke:0.9px #000;transform:scaleX(0.8312) skewX(-15deg);transform-origin:0 37.9px;color:#000">L</div>
<svg style="left:363px;top:452px" width="60" height="40" viewBox="400 562 60 40"><path d="M453 568.2 C440 572 425 578 417.5 586.5 L429 589.5 C422 593 412 595.5 407 594 C403 591 412 578 420 575 L421 576.2" fill="none" stroke="#1a1af0" stroke-width="1"/></svg></div>
<div style="position:absolute;left:529px;top:87px;width:31px;height:18px;box-sizing:border-box;border:1px solid #60738c;border-radius:3px;background:linear-gradient(180deg,#c3d6ec 0%,#b4c9e2 45%,#9db6d3 50%,#b0c7e1 100%);box-shadow:inset 0 0 0 1px rgba(255,255,255,.45)"></div><div style="position:absolute;left:539px;top:95px;width:11px;height:5px;background:#fff;border:1px solid #5a6b80;box-sizing:border-box"></div>
<div style="position:absolute;left:563px;top:87px;width:31px;height:18px;box-sizing:border-box;border:1px solid #60738c;border-radius:3px;background:linear-gradient(180deg,#c3d6ec 0%,#b4c9e2 45%,#9db6d3 50%,#b0c7e1 100%);box-shadow:inset 0 0 0 1px rgba(255,255,255,.45)"></div><div style="position:absolute;left:574px;top:92px;width:9px;height:7px;border:2px solid #fff;outline:1px solid #5a6b80;box-sizing:border-box;background:#9db6d3"></div><div style="position:absolute;left:576px;top:94px;width:5px;height:3px;border:1px solid #5a6b80;box-sizing:border-box"></div>
<div style="position:absolute;left:597px;top:87px;width:31px;height:18px;box-sizing:border-box;border:1px solid #5b2a22;border-radius:3px;background:linear-gradient(180deg,#e9a99c 0%,#d9806f 45%,#c1432b 50%,#c8553c 100%);box-shadow:inset 0 0 0 1px rgba(255,255,255,.45)"></div><svg style="left:606px;top:91px" width="13" height="11" viewBox="0 0 13 11"><path d="M2.2 1.2 L10.8 9 M10.8 1.2 L2.2 9" stroke="#6b2a22" stroke-width="4"/><path d="M2.9 1.8 L10.1 8.4 M10.1 1.8 L2.9 8.4" stroke="#fff" stroke-width="2.3"/></svg>
<svg style="left:37px;top:88px" width="17" height="17" viewBox="0 0 17 17"><defs><linearGradient id="tkr" x1="0" x2="1"><stop offset="0" stop-color="#e8184a"/><stop offset=".35" stop-color="#b80a2e"/><stop offset=".7" stop-color="#e0144a"/><stop offset="1" stop-color="#ee1048"/></linearGradient></defs><path d="M0.3 1.6 L15 1.2 L15.4 0 L16.2 0.3 L16.2 12.3 L15 13 L0.3 13Z" fill="url(#tkr)"/><path d="M0.3 13 L9.2 13 L9.2 15.8 L1.5 15.8 L0.3 14.8Z" fill="#1d4fc0"/><path d="M0.3 13 L5 13 L5 15.8 L1.5 15.8 L0.3 14.8Z" fill="#0a2a8c" opacity=".6"/><path d="M0.3 6.8 H3 M13.3 6.8 H16.2" stroke="#fff" stroke-width="1.6"/><ellipse cx="8" cy="3.5" rx="2.1" ry="1.1" fill="#fff"/><ellipse cx="4.8" cy="5.2" rx="1.8" ry="1" fill="#fff"/><ellipse cx="11.3" cy="5.2" rx="1.8" ry="1" fill="#fff"/><path d="M3.6 8.6 C6 8.6 6.4 6.6 8 6.6 C9.6 6.6 10 8.6 12.4 8.6" fill="none" stroke="#fff" stroke-width="1.9" stroke-linecap="round"/><ellipse cx="8" cy="10.6" rx="2.1" ry="1.2" fill="#fff"/></svg>
<div style="position:absolute;left:639px;top:78px;width:1262px;height:30px;background:linear-gradient(180deg,#bfcddc 0%,#cfdbe8 50%,#dfe9f6 100%)"></div>
<div style="position:absolute;left:639px;top:108px;width:1262px;height:845px;background:linear-gradient(180deg,#ffffff 0.0%,#e6effe 8.3%,#d0e1fd 16.7%,#bcd3fc 25.0%,#a8c6fb 33.3%,#95bafa 41.7%,#82aef9 50.0%,#6fa1f8 58.3%,#5d95f7 66.7%,#4a8af7 75.0%,#387ef6 83.3%,#2772f5 91.7%,#1567f4 100.0%)"></div>
<div style="position:absolute;left:639px;top:108px;width:1262px;height:845px;background:linear-gradient(180deg,#ffffff 0.0%,#eaf0fc 8.3%,#d8e4f9 16.7%,#c6d8f6 25.0%,#b6ccf4 33.3%,#a5c1f1 41.7%,#95b6ef 50.0%,#86abed 58.3%,#76a1ea 66.7%,#6796e8 75.0%,#588ce6 83.3%,#4981e3 91.7%,#3a77e1 100.0%);-webkit-mask-image:linear-gradient(90deg,transparent,#000);mask-image:linear-gradient(90deg,transparent,#000)"></div>
<div class="t" style="left:903.5px;top:87.2px;line-height:19px;font:normal normal 15px 'Liberation Sans', sans-serif;transform:scaleX(0.9836);transform-origin:0 50%;color:#000;">View 1 - 3D</div>
<div style="position:absolute;left:1830px;top:87px;width:31px;height:18px;box-sizing:border-box;border:1px solid #8495aa;border-radius:3px;background:linear-gradient(180deg,#d3dfec 0%,#c5d3e3 45%,#b4c6da 50%,#c6d5e6 100%);box-shadow:inset 0 0 0 1px rgba(255,255,255,.45)"></div><div style="position:absolute;left:1840px;top:95px;width:11px;height:5px;background:#fff;border:1px solid #6a7b90;box-sizing:border-box"></div>
<div style="position:absolute;left:1864px;top:87px;width:31px;height:18px;box-sizing:border-box;border:1px solid #8495aa;border-radius:3px;background:linear-gradient(180deg,#d3dfec 0%,#c5d3e3 45%,#b4c6da 50%,#c6d5e6 100%);box-shadow:inset 0 0 0 1px rgba(255,255,255,.45)"></div><div style="position:absolute;left:1875px;top:92px;width:9px;height:7px;border:2px solid #fff;outline:1px solid #6a7b90;box-sizing:border-box;background:#b4c6da"></div><div style="position:absolute;left:1877px;top:94px;width:5px;height:3px;border:1px solid #6a7b90;box-sizing:border-box"></div>
<div style="position:absolute;left:1898px;top:87px;width:10px;height:18px;box-sizing:border-box;border:1px solid #8495aa;border-radius:3px;background:linear-gradient(180deg,#d3dfec 0%,#c5d3e3 45%,#b4c6da 50%,#c6d5e6 100%);box-shadow:inset 0 0 0 1px rgba(255,255,255,.45)"></div>
<div style="position:absolute;left:1855px;top:885px;width:46px;height:68px;overflow:hidden"><svg style="left:0;top:0" width="60" height="68" viewBox="1855 885 60 68">
<path d="M1892.2 907 H1898.8 V930 H1892.2Z" fill="#8a8686"/><path d="M1892.2 907 H1894.5 V930 H1892.2Z" fill="#a8a4a4"/><path d="M1897 907 H1898.8 V930 H1897Z" fill="#6e6a6a"/>
<path d="M1875 934.5 L1895 927.5 L1899 930 L1905 936 L1902 939 L1896 933.5 L1876.5 939.5Z" fill="#948f8f"/>
<path d="M1895.4 893 L1902 906.5 L1899 908.5 H1892 L1889 906.5Z" fill="#0a0ac8"/><path d="M1895.4 893 L1892 908.5 L1889 906.5Z" fill="#0505a0"/>
<path d="M1861 941.6 L1870.5 931 L1875 932.5 L1876 940.5 L1868 941.8Z" fill="#c80a0a"/><path d="M1861 941.6 L1876 940.5 L1868 941.8Z" fill="#8a0505"/>
<path d="M1877 923 L1887 933 M1887 923 L1877 933" stroke="#e81818" stroke-width="0.9"/></svg></div>
<div style="position:absolute;left:1901px;top:78px;width:15px;height:875px;background:#f0f0f0"></div>
<div style="position:absolute;left:1901px;top:108px;width:1px;height:845px;background:#fff"></div>
<div style="position:absolute;left:1902px;top:95px;width:14px;height:819px;background:#cdcdcd"></div>
<svg style="left:1904.5px;top:83.2px" width="9" height="6" viewBox="0 0 9 6"><path d="M0.8 4.6 L4.5 1.2 L8.2 4.6" fill="none" stroke="#606060" stroke-width="1.9"/></svg>
<svg style="left:1905.0px;top:941.8px" width="9" height="6" viewBox="0 0 9 6"><path d="M0.8 1.2 L4.5 4.6 L8.2 1.2" fill="none" stroke="#606060" stroke-width="1.9"/></svg>
<div style="position:absolute;left:939px;top:154px;width:990px;height:594px;background:#ebebeb;box-sizing:border-box;border:1px solid #d6d6d6"></div>
<div style="position:absolute;left:946px;top:184px;width:980px;height:557px;background:#f0f0f0;box-sizing:border-box;border:1px solid #e2e2e2"></div>
<svg style="left:949px;top:161px" width="17" height="17" viewBox="0 0 17 17"><defs><linearGradient id="tkr" x1="0" x2="1"><stop offset="0" stop-color="#e8184a"/><stop offset=".35" stop-color="#b80a2e"/><stop offset=".7" stop-color="#e0144a"/><stop offset="1" stop-color="#ee1048"/></linearGradient></defs><path d="M0.3 1.6 L15 1.2 L15.4 0 L16.2 0.3 L16.2 12.3 L15 13 L0.3 13Z" fill="url(#tkr)"/><path d="M0.3 13 L9.2 13 L9.2 15.8 L1.5 15.8 L0.3 14.8Z" fill="#1d4fc0"/><path d="M0.3 13 L5 13 L5 15.8 L1.5 15.8 L0.3 14.8Z" fill="#0a2a8c" opacity=".6"/><path d="M0.3 6.8 H3 M13.3 6.8 H16.2" stroke="#fff" stroke-width="1.6"/><ellipse cx="8" cy="3.5" rx="2.1" ry="1.1" fill="#fff"/><ellipse cx="4.8" cy="5.2" rx="1.8" ry="1" fill="#fff"/><ellipse cx="11.3" cy="5.2" rx="1.8" ry="1" fill="#fff"/><path d="M3.6 8.6 C6 8.6 6.4 6.6 8 6.6 C9.6 6.6 10 8.6 12.4 8.6" fill="none" stroke="#fff" stroke-width="1.9" stroke-linecap="round"/><ellipse cx="8" cy="10.6" rx="2.1" ry="1.2" fill="#fff"/></svg>
<div class="t" style="left:1508px;top:161.0px;line-height:20px;font:normal normal 16px 'Liberation Sans', sans-serif;transform:scaleX(0.9431);transform-origin:0 50%;color:#444;">Список чертежей</div>
<div class="t" style="left:952px;top:190.9px;line-height:15px;font:normal normal 12px 'Liberation Sans', sans-serif;transform:scaleX(0.9821);transform-origin:0 50%;color:#000;">Введите критерии поиска:</div>
<div class="inp" style="left:1122px;top:192px;width:360px;height:19px;border-color:#8c8c8c"></div>
<div class="t" style="left:1489px;top:190.9px;line-height:15px;font:normal normal 12px 'Liberation Sans', sans-serif;transform:scaleX(1.0100);transform-origin:0 50%;color:#000;">Поиск в</div>
<div class="inp" style="left:1540px;top:190px;width:250px;height:20px;border-color:#adadad"></div><svg style="left:1777.1px;top:196.6px" width="9" height="6" viewBox="0 0 9 6"><path d="M0.8 1.2 L4.5 4.6 L8.2 1.2" fill="none" stroke="#505050" stroke-width="1.9"/></svg>
<div class="btn" style="left:1797px;top:188px;width:64px;height:23px"></div>
<div class="t" style="left:1811px;top:192.9px;line-height:15px;font:normal normal 12px 'Liberation Sans', sans-serif;transform:scaleX(1.0521);transform-origin:0 50%;color:#000;">Поиск</div>
<div style="position:absolute;left:1869px;top:191px;width:13px;height:13px;box-sizing:border-box;border:1px solid #333;background:#fff"></div>
<div class="t" style="left:1885.6px;top:190.9px;line-height:15px;font:normal normal 12px 'Liberation Sans', sans-serif;transform:scaleX(0.9300);transform-origin:0 50%;color:#000;">Поиск в</div>
<div class="t" style="left:952px;top:215.7px;line-height:15px;font:normal normal 12px 'Liberation Sans', sans-serif;transform:scaleX(0.9940);transform-origin:0 50%;color:#000;">или выбрать набор чертежей</div>
<div class="inp" style="left:1122px;top:222px;width:668px;height:21px;border-color:#adadad"></div><div class="t" style="left:1127px;top:226.5px;line-height:15px;font:normal normal 12px 'Liberation Sans', sans-serif;transform:scaleX(0.9184);transform-origin:0 50%;color:#000;">Все</div><svg style="left:1777.1px;top:229.1px" width="9" height="6" viewBox="0 0 9 6"><path d="M0.8 1.2 L4.5 4.6 L8.2 1.2" fill="none" stroke="#505050" stroke-width="1.9"/></svg>
<div class="btn" style="left:1795px;top:217.5px;width:69px;height:22.5px"></div>
<div class="t" style="left:1799px;top:221.9px;line-height:15px;font:normal normal 12px 'Liberation Sans', sans-serif;transform:scaleX(1.0063);transform-origin:0 50%;color:#000;">Запомнить</div>
<div style="position:absolute;left:952px;top:257px;width:964px;height:1px;background:#dcdcdc"></div>
<div style="position:absolute;left:952px;top:257px;width:1px;height:449px;background:#dcdcdc"></div>
<div style="position:absolute;left:952px;top:705px;width:886px;height:1px;background:#dcdcdc"></div>
<div style="position:absolute;left:956px;top:266px;width:881px;height:437px;box-sizing:border-box;border:1px solid #828790;background:#fff"></div>
<div style="position:absolute;left:957px;top:267px;width:879px;height:435px;overflow:hidden;background:#fff"><div style="position:absolute;left:0px;top:0px;width:861px;height:24px;background:#fff"></div>
<div style="position:absolute;left:0px;top:23px;width:861px;height:1px;background:#e5edf7"></div>
<div style="position:absolute;left:44px;top:0px;width:1px;height:23px;background:#e5e5e5"></div>
<div style="position:absolute;left:88px;top:0px;width:1px;height:23px;background:#e5e5e5"></div>
<div style="position:absolute;left:93px;top:0px;width:1px;height:23px;background:#e5e5e5"></div>
<div style="position:absolute;left:98px;top:0px;width:1px;height:23px;background:#e5e5e5"></div>
<div style="position:absolute;left:103px;top:0px;width:1px;height:23px;background:#e5e5e5"></div>
<div style="position:absolute;left:229px;top:0px;width:1px;height:23px;background:#e5e5e5"></div>
<div style="position:absolute;left:295px;top:0px;width:1px;height:23px;background:#e5e5e5"></div>
<div style="position:absolute;left:361px;top:0px;width:1px;height:23px;background:#e5e5e5"></div>
<div style="position:absolute;left:404px;top:0px;width:1px;height:23px;background:#e5e5e5"></div>
<div style="position:absolute;left:481px;top:0px;width:1px;height:23px;background:#e5e5e5"></div>
<div style="position:absolute;left:514px;top:0px;width:1px;height:23px;background:#e5e5e5"></div>
<div style="position:absolute;left:591px;top:0px;width:1px;height:23px;background:#e5e5e5"></div>
<div style="position:absolute;left:701px;top:0px;width:1px;height:23px;background:#e5e5e5"></div>
<div class="t" style="left:7.2999999999999545px;top:5.9px;line-height:15px;font:normal normal 12px 'Liberation Sans', sans-serif;transform:scaleX(0.9680);transform-origin:0 50%;color:#000;">Опуб...</div>
<div class="t" style="left:51px;top:5.9px;line-height:15px;font:normal normal 12px 'Liberation Sans', sans-serif;transform:scaleX(0.9725);transform-origin:0 50%;color:#000;">Блок...</div>
<div class="t" style="left:110px;top:5.9px;line-height:15px;font:normal normal 12px 'Liberation Sans', sans-serif;transform:scaleX(0.9857);transform-origin:0 50%;color:#000;">Изменения</div>
<div class="t" style="left:236.29999999999995px;top:5.9px;line-height:15px;font:normal normal 12px 'Liberation Sans', sans-serif;transform:scaleX(0.9553);transform-origin:0 50%;color:#000;">Создано</div>
<div class="t" style="left:302px;top:5.9px;line-height:15px;font:normal normal 12px 'Liberation Sans', sans-serif;transform:scaleX(0.9972);transform-origin:0 50%;color:#000;">Изменено</div>
<div class="t" style="left:368px;top:5.9px;line-height:15px;font:normal normal 12px 'Liberation Sans', sans-serif;transform:scaleX(0.8888);transform-origin:0 50%;color:#000;">Реда...</div>
<div class="t" style="left:411px;top:5.9px;line-height:15px;font:normal normal 12px 'Liberation Sans', sans-serif;transform:scaleX(0.9455);transform-origin:0 50%;color:#000;">Размер</div>
<div class="t" style="left:488.5999999999999px;top:5.9px;line-height:15px;font:normal normal 12px 'Liberation Sans', sans-serif;transform:scaleX(1.0192);transform-origin:0 50%;color:#000;">Тип</div>
<div class="t" style="left:521px;top:5.9px;line-height:15px;font:normal normal 12px 'Liberation Sans', sans-serif;transform:scaleX(0.9797);transform-origin:0 50%;color:#000;">Метка</div>
<div class="t" style="left:598px;top:5.9px;line-height:15px;font:normal normal 12px 'Liberation Sans', sans-serif;transform:scaleX(1.0096);transform-origin:0 50%;color:#000;">Имя</div>
<div class="t" style="left:707.8px;top:5.9px;line-height:15px;font:normal normal 12px 'Liberation Sans', sans-serif;transform:scaleX(1.0024);transform-origin:0 50%;color:#000;">Заголовок 1</div>
<div class="t" style="left:236.29999999999995px;top:27.9px;line-height:15px;font:normal normal 12px 'Liberation Sans', sans-serif;transform:scaleX(0.9000);transform-origin:0 50%;color:#000;">02.05.2017</div>
<div class="t" style="left:302.0999999999999px;top:27.9px;line-height:15px;font:normal normal 12px 'Liberation Sans', sans-serif;transform:scaleX(0.9000);transform-origin:0 50%;color:#000;">02.05.2017</div>
<div class="t" style="left:368.20000000000005px;top:27.9px;line-height:15px;font:normal normal 12px 'Liberation Sans', sans-serif;transform:scaleX(0.9000);transform-origin:0 50%;color:#000;">36</div>
<div class="t" style="left:414px;top:27.9px;line-height:15px;font:normal normal 12px 'Liberation Sans', sans-serif;transform:scaleX(0.9000);transform-origin:0 50%;color:#000;">210* 297</div>
<div class="t" style="left:487.79999999999995px;top:27.9px;line-height:15px;font:normal normal 12px 'Liberation Sans', sans-serif;transform:scaleX(0.9981);transform-origin:0 50%;color:#000;">A</div>
<div class="t" style="left:521.3px;top:27.9px;line-height:15px;font:normal normal 12px 'Liberation Sans', sans-serif;transform:scaleX(0.9435);transform-origin:0 50%;color:#000;">[Д36.4]</div>
<div class="t" style="left:708px;top:27.9px;line-height:15px;font:normal normal 12px 'Liberation Sans', sans-serif;transform:scaleX(1.0348);transform-origin:0 50%;color:#000;">КМД</div>
<div class="t" style="left:236.29999999999995px;top:46.9px;line-height:15px;font:normal normal 12px 'Liberation Sans', sans-serif;transform:scaleX(0.9000);transform-origin:0 50%;color:#000;">02.05.2017</div>
<div class="t" style="left:302.0999999999999px;top:46.9px;line-height:15px;font:normal normal 12px 'Liberation Sans', sans-serif;transform:scaleX(0.9000);transform-origin:0 50%;color:#000;">02.05.2017</div>
<div class="t" style="left:368.20000000000005px;top:46.9px;line-height:15px;font:normal normal 12px 'Liberation Sans', sans-serif;transform:scaleX(0.9000);transform-origin:0 50%;color:#000;">35</div>
<div class="t" style="left:414px;top:46.9px;line-height:15px;font:normal normal 12px 'Liberation Sans', sans-serif;transform:scaleX(0.9000);transform-origin:0 50%;color:#000;">210* 297</div>
<div class="t" style="left:487.79999999999995px;top:46.9px;line-height:15px;font:normal normal 12px 'Liberation Sans', sans-serif;transform:scaleX(0.9981);transform-origin:0 50%;color:#000;">A</div>
<div class="t" style="left:521.3px;top:46.9px;line-height:15px;font:normal normal 12px 'Liberation Sans', sans-serif;transform:scaleX(0.8940);transform-origin:0 50%;color:#000;">[Е35.1]</div>
<div class="t" style="left:708px;top:46.9px;line-height:15px;font:normal normal 12px 'Liberation Sans', sans-serif;transform:scaleX(1.0348);transform-origin:0 50%;color:#000;">КМД</div>
<div style="position:absolute;left:5px;top:63px;width:856px;height:19px;background:#3399ff"></div>
<div class="t" style="left:236.29999999999995px;top:65.9px;line-height:15px;font:normal normal 12px 'Liberation Sans', sans-serif;transform:scaleX(0.9000);transform-origin:0 50%;color:#fff;">02.05.2017</div>
<div class="t" style="left:302.0999999999999px;top:65.9px;line-height:15px;font:normal normal 12px 'Liberation Sans', sans-serif;transform:scaleX(0.9000);transform-origin:0 50%;color:#fff;">02.05.2017</div>
<div class="t" style="left:368.20000000000005px;top:65.9px;line-height:15px;font:normal normal 12px 'Liberation Sans', sans-serif;transform:scaleX(0.9000);transform-origin:0 50%;color:#fff;">35</div>
<div class="t" style="left:414px;top:65.9px;line-height:15px;font:normal normal 12px 'Liberation Sans', sans-serif;transform:scaleX(0.9000);transform-origin:0 50%;color:#fff;">210* 297</div>
<div class="t" style="left:487.79999999999995px;top:65.9px;line-height:15px;font:normal normal 12px 'Liberation Sans', sans-serif;transform:scaleX(0.9981);transform-origin:0 50%;color:#fff;">A</div>
<div class="t" style="left:521.3px;top:65.9px;line-height:15px;font:normal normal 12px 'Liberation Sans', sans-serif;transform:scaleX(0.8940);transform-origin:0 50%;color:#fff;">[Е35.2]</div>
<div class="t" style="left:708px;top:65.9px;line-height:15px;font:normal normal 12px 'Liberation Sans', sans-serif;transform:scaleX(1.0348);transform-origin:0 50%;color:#fff;">КМД</div>
<div class="t" style="left:236.29999999999995px;top:84.9px;line-height:15px;font:normal normal 12px 'Liberation Sans', sans-serif;transform:scaleX(0.9000);transform-origin:0 50%;color:#000;">02.05.2017</div>
<div class="t" style="left:302.0999999999999px;top:84.9px;line-height:15px;font:normal normal 12px 'Liberation Sans', sans-serif;transform:scaleX(0.9000);transform-origin:0 50%;color:#000;">02.05.2017</div>
<div class="t" style="left:368.20000000000005px;top:84.9px;line-height:15px;font:normal normal 12px 'Liberation Sans', sans-serif;transform:scaleX(0.9000);transform-origin:0 50%;color:#000;">35</div>
<div class="t" style="left:414px;top:84.9px;line-height:15px;font:normal normal 12px 'Liberation Sans', sans-serif;transform:scaleX(0.9000);transform-origin:0 50%;color:#000;">210* 297</div>
<div class="t" style="left:487.79999999999995px;top:84.9px;line-height:15px;font:normal normal 12px 'Liberation Sans', sans-serif;transform:scaleX(0.9981);transform-origin:0 50%;color:#000;">A</div>
<div class="t" style="left:521.3px;top:84.9px;line-height:15px;font:normal normal 12px 'Liberation Sans', sans-serif;transform:scaleX(0.9130);transform-origin:0 50%;color:#000;">[Е35.11]</div>
<div class="t" style="left:708px;top:84.9px;line-height:15px;font:normal normal 12px 'Liberation Sans', sans-serif;transform:scaleX(1.0348);transform-origin:0 50%;color:#000;">КМД</div>
<div class="t" style="left:236.29999999999995px;top:103.9px;line-height:15px;font:normal normal 12px 'Liberation Sans', sans-serif;transform:scaleX(0.9000);transform-origin:0 50%;color:#000;">02.05.2017</div>
<div class="t" style="left:302.0999999999999px;top:103.9px;line-height:15px;font:normal normal 12px 'Liberation Sans', sans-serif;transform:scaleX(0.9000);transform-origin:0 50%;color:#000;">02.05.2017</div>
<div class="t" style="left:368.20000000000005px;top:103.9px;line-height:15px;font:normal normal 12px 'Liberation Sans', sans-serif;transform:scaleX(0.9000);transform-origin:0 50%;color:#000;">36</div>
<div class="t" style="left:414px;top:103.9px;line-height:15px;font:normal normal 12px 'Liberation Sans', sans-serif;transform:scaleX(0.9000);transform-origin:0 50%;color:#000;">210* 297</div>
<div class="t" style="left:487.79999999999995px;top:103.9px;line-height:15px;font:normal normal 12px 'Liberation Sans', sans-serif;transform:scaleX(0.9981);transform-origin:0 50%;color:#000;">A</div>
<div class="t" style="left:521.3px;top:103.9px;line-height:15px;font:normal normal 12px 'Liberation Sans', sans-serif;transform:scaleX(0.8948);transform-origin:0 50%;color:#000;">[Е36.13]</div>
<div class="t" style="left:708px;top:103.9px;line-height:15px;font:normal normal 12px 'Liberation Sans', sans-serif;transform:scaleX(1.0348);transform-origin:0 50%;color:#000;">КМД</div>
<div class="t" style="left:236.29999999999995px;top:122.9px;line-height:15px;font:normal normal 12px 'Liberation Sans', sans-serif;transform:scaleX(0.9000);transform-origin:0 50%;color:#000;">02.05.2017</div>
<div class="t" style="left:302.0999999999999px;top:122.9px;line-height:15px;font:normal normal 12px 'Liberation Sans', sans-serif;transform:scaleX(0.9000);transform-origin:0 50%;color:#000;">02.05.2017</div>
<div class="t" style="left:368.20000000000005px;top:122.9px;line-height:15px;font:normal normal 12px 'Liberation Sans', sans-serif;transform:scaleX(0.9000);transform-origin:0 50%;color:#000;">36</div>
<div class="t" style="left:414px;top:122.9px;line-height:15px;font:normal normal 12px 'Liberation Sans', sans-serif;transform:scaleX(0.9000);transform-origin:0 50%;color:#000;">210* 297</div>
<div class="t" style="left:487.79999999999995px;top:122.9px;line-height:15px;font:normal normal 12px 'Liberation Sans', sans-serif;transform:scaleX(0.9981);transform-origin:0 50%;color:#000;">A</div>
<div class="t" style="left:521.3px;top:122.9px;line-height:15px;font:normal normal 12px 'Liberation Sans', sans-serif;transform:scaleX(0.9497);transform-origin:0 50%;color:#000;">[Л36.3]</div>
<div class="t" style="left:708px;top:122.9px;line-height:15px;font:normal normal 12px 'Liberation Sans', sans-serif;transform:scaleX(1.0348);transform-origin:0 50%;color:#000;">КМД</div>
<div class="t" style="left:110px;top:141.9px;line-height:15px;font:normal normal 12px 'Liberation Sans', sans-serif;transform:scaleX(0.9773);transform-origin:0 50%;color:#000;">Измененные детали</div>
<div class="t" style="left:236.29999999999995px;top:141.9px;line-height:15px;font:normal normal 12px 'Liberation Sans', sans-serif;transform:scaleX(0.9000);transform-origin:0 50%;color:#000;">02.05.2017</div>
<div class="t" style="left:302.0999999999999px;top:141.9px;line-height:15px;font:normal normal 12px 'Liberation Sans', sans-serif;transform:scaleX(0.9000);transform-origin:0 50%;color:#000;">02.05.2017</div>
<div class="t" style="left:368.20000000000005px;top:141.9px;line-height:15px;font:normal normal 12px 'Liberation Sans', sans-serif;transform:scaleX(0.9000);transform-origin:0 50%;color:#000;">36</div>
<div class="t" style="left:414px;top:141.9px;line-height:15px;font:normal normal 12px 'Liberation Sans', sans-serif;transform:scaleX(0.9000);transform-origin:0 50%;color:#000;">420* 297</div>
<div class="t" style="left:487.79999999999995px;top:141.9px;line-height:15px;font:normal normal 12px 'Liberation Sans', sans-serif;transform:scaleX(0.9981);transform-origin:0 50%;color:#000;">A</div>
<div class="t" style="left:521.3px;top:141.9px;line-height:15px;font:normal normal 12px 'Liberation Sans', sans-serif;transform:scaleX(0.9497);transform-origin:0 50%;color:#000;">[Л36.4]</div>
<div class="t" style="left:708px;top:141.9px;line-height:15px;font:normal normal 12px 'Liberation Sans', sans-serif;transform:scaleX(1.0348);transform-origin:0 50%;color:#000;">КМД</div>
<div class="t" style="left:236.29999999999995px;top:160.9px;line-height:15px;font:normal normal 12px 'Liberation Sans', sans-serif;transform:scaleX(0.9000);transform-origin:0 50%;color:#000;">02.05.2017</div>
<div class="t" style="left:302.0999999999999px;top:160.9px;line-height:15px;font:normal normal 12px 'Liberation Sans', sans-serif;transform:scaleX(0.9000);transform-origin:0 50%;color:#000;">00.00.0000</div>
<div class="t" style="left:414px;top:160.9px;line-height:15px;font:normal normal 12px 'Liberation Sans', sans-serif;transform:scaleX(0.9000);transform-origin:0 50%;color:#000;">420* 297</div>
<div class="t" style="left:487.79999999999995px;top:160.9px;line-height:15px;font:normal normal 12px 'Liberation Sans', sans-serif;transform:scaleX(0.9981);transform-origin:0 50%;color:#000;">A</div>
<div class="t" style="left:521.3px;top:160.9px;line-height:15px;font:normal normal 12px 'Liberation Sans', sans-serif;transform:scaleX(0.9471);transform-origin:0 50%;color:#000;">[МдБ36.1]</div>
<div class="t" style="left:708px;top:160.9px;line-height:15px;font:normal normal 12px 'Liberation Sans', sans-serif;transform:scaleX(1.0348);transform-origin:0 50%;color:#000;">КМД</div>
<div class="t" style="left:236.29999999999995px;top:179.9px;line-height:15px;font:normal normal 12px 'Liberation Sans', sans-serif;transform:scaleX(0.9000);transform-origin:0 50%;color:#000;">28.04.2017</div>
<div class="t" style="left:302.0999999999999px;top:179.9px;line-height:15px;font:normal normal 12px 'Liberation Sans', sans-serif;transform:scaleX(0.9000);transform-origin:0 50%;color:#000;">02.05.2017</div>
<div class="t" style="left:368.20000000000005px;top:179.9px;line-height:15px;font:normal normal 12px 'Liberation Sans', sans-serif;transform:scaleX(0.9000);transform-origin:0 50%;color:#000;">36</div>
<div class="t" style="left:414px;top:179.9px;line-height:15px;font:normal normal 12px 'Liberation Sans', sans-serif;transform:scaleX(0.9000);transform-origin:0 50%;color:#000;">210* 297</div>
<div class="t" style="left:487.79999999999995px;top:179.9px;line-height:15px;font:normal normal 12px 'Liberation Sans', sans-serif;transform:scaleX(0.9981);transform-origin:0 50%;color:#000;">A</div>
<div class="t" style="left:521.3px;top:179.9px;line-height:15px;font:normal normal 12px 'Liberation Sans', sans-serif;transform:scaleX(0.8948);transform-origin:0 50%;color:#000;">[Е36.14]</div>
<div class="t" style="left:708px;top:179.9px;line-height:15px;font:normal normal 12px 'Liberation Sans', sans-serif;transform:scaleX(1.0348);transform-origin:0 50%;color:#000;">КМД</div>
<div class="t" style="left:236.29999999999995px;top:198.9px;line-height:15px;font:normal normal 12px 'Liberation Sans', sans-serif;transform:scaleX(0.9000);transform-origin:0 50%;color:#000;">28.04.2017</div>
<div class="t" style="left:302.0999999999999px;top:198.9px;line-height:15px;font:normal normal 12px 'Liberation Sans', sans-serif;transform:scaleX(0.9000);transform-origin:0 50%;color:#000;">02.05.2017</div>
<div class="t" style="left:368.20000000000005px;top:198.9px;line-height:15px;font:normal normal 12px 'Liberation Sans', sans-serif;transform:scaleX(0.9000);transform-origin:0 50%;color:#000;">36</div>
<div class="t" style="left:414px;top:198.9px;line-height:15px;font:normal normal 12px 'Liberation Sans', sans-serif;transform:scaleX(0.9000);transform-origin:0 50%;color:#000;">210* 297</div>
<div class="t" style="left:487.79999999999995px;top:198.9px;line-height:15px;font:normal normal 12px 'Liberation Sans', sans-serif;transform:scaleX(0.9981);transform-origin:0 50%;color:#000;">A</div>
<div class="t" style="left:521.3px;top:198.9px;line-height:15px;font:normal normal 12px 'Liberation Sans', sans-serif;transform:scaleX(0.9497);transform-origin:0 50%;color:#000;">[Л36.2]</div>
<div class="t" style="left:708px;top:198.9px;line-height:15px;font:normal normal 12px 'Liberation Sans', sans-serif;transform:scaleX(1.0348);transform-origin:0 50%;color:#000;">КМД</div>
<div class="t" style="left:236.29999999999995px;top:217.9px;line-height:15px;font:normal normal 12px 'Liberation Sans', sans-serif;transform:scaleX(0.9000);transform-origin:0 50%;color:#000;">28.04.2017</div>
<div class="t" style="left:302.0999999999999px;top:217.9px;line-height:15px;font:normal normal 12px 'Liberation Sans', sans-serif;transform:scaleX(0.9000);transform-origin:0 50%;color:#000;">02.05.2017</div>
<div class="t" style="left:368.20000000000005px;top:217.9px;line-height:15px;font:normal normal 12px 'Liberation Sans', sans-serif;transform:scaleX(0.9000);transform-origin:0 50%;color:#000;">36</div>
<div class="t" style="left:414px;top:217.9px;line-height:15px;font:normal normal 12px 'Liberation Sans', sans-serif;transform:scaleX(0.9000);transform-origin:0 50%;color:#000;">210* 297</div>
<div class="t" style="left:487.79999999999995px;top:217.9px;line-height:15px;font:normal normal 12px 'Liberation Sans', sans-serif;transform:scaleX(0.9981);transform-origin:0 50%;color:#000;">A</div>
<div class="t" style="left:521.3px;top:217.9px;line-height:15px;font:normal normal 12px 'Liberation Sans', sans-serif;transform:scaleX(0.9497);transform-origin:0 50%;color:#000;">[Л36.5]</div>
<div class="t" style="left:708px;top:217.9px;line-height:15px;font:normal normal 12px 'Liberation Sans', sans-serif;transform:scaleX(1.0348);transform-origin:0 50%;color:#000;">КМД</div>
<div class="t" style="left:236.29999999999995px;top:236.9px;line-height:15px;font:normal normal 12px 'Liberation Sans', sans-serif;transform:scaleX(0.9000);transform-origin:0 50%;color:#000;">28.04.2017</div>
<div class="t" style="left:302.0999999999999px;top:236.9px;line-height:15px;font:normal normal 12px 'Liberation Sans', sans-serif;transform:scaleX(0.9000);transform-origin:0 50%;color:#000;">02.05.2017</div>
<div class="t" style="left:368.20000000000005px;top:236.9px;line-height:15px;font:normal normal 12px 'Liberation Sans', sans-serif;transform:scaleX(0.9000);transform-origin:0 50%;color:#000;">36</div>
<div class="t" style="left:414px;top:236.9px;line-height:15px;font:normal normal 12px 'Liberation Sans', sans-serif;transform:scaleX(0.9000);transform-origin:0 50%;color:#000;">210* 297</div>
<div class="t" style="left:487.79999999999995px;top:236.9px;line-height:15px;font:normal normal 12px 'Liberation Sans', sans-serif;transform:scaleX(0.9981);transform-origin:0 50%;color:#000;">A</div>
<div class="t" style="left:521.3px;top:236.9px;line-height:15px;font:normal normal 12px 'Liberation Sans', sans-serif;transform:scaleX(0.9497);transform-origin:0 50%;color:#000;">[Л36.7]</div>
<div class="t" style="left:708px;top:236.9px;line-height:15px;font:normal normal 12px 'Liberation Sans', sans-serif;transform:scaleX(1.0348);transform-origin:0 50%;color:#000;">КМД</div>
<div class="t" style="left:236.29999999999995px;top:255.9px;line-height:15px;font:normal normal 12px 'Liberation Sans', sans-serif;transform:scaleX(0.9000);transform-origin:0 50%;color:#000;">28.04.2017</div>
<div class="t" style="left:302.0999999999999px;top:255.9px;line-height:15px;font:normal normal 12px 'Liberation Sans', sans-serif;transform:scaleX(0.9000);transform-origin:0 50%;color:#000;">02.05.2017</div>
<div class="t" style="left:368.20000000000005px;top:255.9px;line-height:15px;font:normal normal 12px 'Liberation Sans', sans-serif;transform:scaleX(0.9000);transform-origin:0 50%;color:#000;">36</div>
<div class="t" style="left:414px;top:255.9px;line-height:15px;font:normal normal 12px 'Liberation Sans', sans-serif;transform:scaleX(0.9000);transform-origin:0 50%;color:#000;">210* 297</div>
<div class="t" style="left:487.79999999999995px;top:255.9px;line-height:15px;font:normal normal 12px 'Liberation Sans', sans-serif;transform:scaleX(0.9981);transform-origin:0 50%;color:#000;">A</div>
<div class="t" style="left:521.3px;top:255.9px;line-height:15px;font:normal normal 12px 'Liberation Sans', sans-serif;transform:scaleX(0.9497);transform-origin:0 50%;color:#000;">[Л36.8]</div>
<div class="t" style="left:708px;top:255.9px;line-height:15px;font:normal normal 12px 'Liberation Sans', sans-serif;transform:scaleX(1.0348);transform-origin:0 50%;color:#000;">КМД</div>
<div class="t" style="left:236.29999999999995px;top:274.9px;line-height:15px;font:normal normal 12px 'Liberation Sans', sans-serif;transform:scaleX(0.9000);transform-origin:0 50%;color:#000;">28.04.2017</div>
<div class="t" style="left:302.0999999999999px;top:274.9px;line-height:15px;font:normal normal 12px 'Liberation Sans', sans-serif;transform:scaleX(0.9000);transform-origin:0 50%;color:#000;">02.05.2017</div>
<div class="t" style="left:368.20000000000005px;top:274.9px;line-height:15px;font:normal normal 12px 'Liberation Sans', sans-serif;transform:scaleX(0.9000);transform-origin:0 50%;color:#000;">36</div>
<div class="t" style="left:414px;top:274.9px;line-height:15px;font:normal normal 12px 'Liberation Sans', sans-serif;transform:scaleX(0.9000);transform-origin:0 50%;color:#000;">210* 297</div>
<div class="t" style="left:487.79999999999995px;top:274.9px;line-height:15px;font:normal normal 12px 'Liberation Sans', sans-serif;transform:scaleX(0.9981);transform-origin:0 50%;color:#000;">A</div>
<div class="t" style="left:521.3px;top:274.9px;line-height:15px;font:normal normal 12px 'Liberation Sans', sans-serif;transform:scaleX(0.9497);transform-origin:0 50%;color:#000;">[Л36.9]</div>
<div class="t" style="left:708px;top:274.9px;line-height:15px;font:normal normal 12px 'Liberation Sans', sans-serif;transform:scaleX(1.0348);transform-origin:0 50%;color:#000;">КМД</div>
<div class="t" style="left:236.29999999999995px;top:293.9px;line-height:15px;font:normal normal 12px 'Liberation Sans', sans-serif;transform:scaleX(0.9000);transform-origin:0 50%;color:#000;">28.04.2017</div>
<div class="t" style="left:302.0999999999999px;top:293.9px;line-height:15px;font:normal normal 12px 'Liberation Sans', sans-serif;transform:scaleX(0.9000);transform-origin:0 50%;color:#000;">02.05.2017</div>
<div class="t" style="left:368.20000000000005px;top:293.9px;line-height:15px;font:normal normal 12px 'Liberation Sans', sans-serif;transform:scaleX(0.9000);transform-origin:0 50%;color:#000;">36</div>
<div class="t" style="left:414px;top:293.9px;line-height:15px;font:normal normal 12px 'Liberation Sans', sans-serif;transform:scaleX(0.9000);transform-origin:0 50%;color:#000;">420* 297</div>
<div class="t" style="left:487.79999999999995px;top:293.9px;line-height:15px;font:normal normal 12px 'Liberation Sans', sans-serif;transform:scaleX(0.9981);transform-origin:0 50%;color:#000;">A</div>
<div class="t" style="left:521.3px;top:293.9px;line-height:15px;font:normal normal 12px 'Liberation Sans', sans-serif;transform:scaleX(0.9544);transform-origin:0 50%;color:#000;">[Р1-36.11]</div>
<div class="t" style="left:708px;top:293.9px;line-height:15px;font:normal normal 12px 'Liberation Sans', sans-serif;transform:scaleX(1.0348);transform-origin:0 50%;color:#000;">КМД</div>
<div class="t" style="left:236.29999999999995px;top:312.9px;line-height:15px;font:normal normal 12px 'Liberation Sans', sans-serif;transform:scaleX(0.9000);transform-origin:0 50%;color:#000;">28.04.2017</div>
<div class="t" style="left:302.0999999999999px;top:312.9px;line-height:15px;font:normal normal 12px 'Liberation Sans', sans-serif;transform:scaleX(0.9000);transform-origin:0 50%;color:#000;">02.05.2017</div>
<div class="t" style="left:368.20000000000005px;top:312.9px;line-height:15px;font:normal normal 12px 'Liberation Sans', sans-serif;transform:scaleX(0.9000);transform-origin:0 50%;color:#000;">36</div>
<div class="t" style="left:414px;top:312.9px;line-height:15px;font:normal normal 12px 'Liberation Sans', sans-serif;transform:scaleX(0.9000);transform-origin:0 50%;color:#000;">420* 297</div>
<div class="t" style="left:487.79999999999995px;top:312.9px;line-height:15px;font:normal normal 12px 'Liberation Sans', sans-serif;transform:scaleX(0.9981);transform-origin:0 50%;color:#000;">A</div>
<div class="t" style="left:521.3px;top:312.9px;line-height:15px;font:normal normal 12px 'Liberation Sans', sans-serif;transform:scaleX(0.9391);transform-origin:0 50%;color:#000;">[Р1-36.17]</div>
<div class="t" style="left:708px;top:312.9px;line-height:15px;font:normal normal 12px 'Liberation Sans', sans-serif;transform:scaleX(1.0348);transform-origin:0 50%;color:#000;">КМД</div>
<div class="t" style="left:236.29999999999995px;top:331.9px;line-height:15px;font:normal normal 12px 'Liberation Sans', sans-serif;transform:scaleX(0.9000);transform-origin:0 50%;color:#000;">28.04.2017</div>
<div class="t" style="left:302.0999999999999px;top:331.9px;line-height:15px;font:normal normal 12px 'Liberation Sans', sans-serif;transform:scaleX(0.9000);transform-origin:0 50%;color:#000;">02.05.2017</div>
<div class="t" style="left:368.20000000000005px;top:331.9px;line-height:15px;font:normal normal 12px 'Liberation Sans', sans-serif;transform:scaleX(0.9000);transform-origin:0 50%;color:#000;">36</div>
<div class="t" style="left:414px;top:331.9px;line-height:15px;font:normal normal 12px 'Liberation Sans', sans-serif;transform:scaleX(0.9000);transform-origin:0 50%;color:#000;">420* 297</div>
<div class="t" style="left:487.79999999999995px;top:331.9px;line-height:15px;font:normal normal 12px 'Liberation Sans', sans-serif;transform:scaleX(0.9981);transform-origin:0 50%;color:#000;">A</div>
<div class="t" style="left:521.3px;top:331.9px;line-height:15px;font:normal normal 12px 'Liberation Sans', sans-serif;transform:scaleX(0.9391);transform-origin:0 50%;color:#000;">[Р1-36.20]</div>
<div class="t" style="left:708px;top:331.9px;line-height:15px;font:normal normal 12px 'Liberation Sans', sans-serif;transform:scaleX(1.0348);transform-origin:0 50%;color:#000;">КМД</div>
<div class="t" style="left:236.29999999999995px;top:350.9px;line-height:15px;font:normal normal 12px 'Liberation Sans', sans-serif;transform:scaleX(0.9000);transform-origin:0 50%;color:#000;">28.04.2017</div>
<div class="t" style="left:302.0999999999999px;top:350.9px;line-height:15px;font:normal normal 12px 'Liberation Sans', sans-serif;transform:scaleX(0.9000);transform-origin:0 50%;color:#000;">28.04.2017</div>
<div class="t" style="left:414px;top:350.9px;line-height:15px;font:normal normal 12px 'Liberation Sans', sans-serif;transform:scaleX(0.9000);transform-origin:0 50%;color:#000;">594* 420</div>
<div class="t" style="left:487.79999999999995px;top:350.9px;line-height:15px;font:normal normal 12px 'Liberation Sans', sans-serif;transform:scaleX(0.8562);transform-origin:0 50%;color:#000;">G</div>
<div class="t" style="left:521.3px;top:350.9px;line-height:15px;font:normal normal 12px 'Liberation Sans', sans-serif;transform:scaleX(0.9493);transform-origin:0 50%;color:#000;">[54]</div>
<div class="t" style="left:236.29999999999995px;top:369.9px;line-height:15px;font:normal normal 12px 'Liberation Sans', sans-serif;transform:scaleX(0.9000);transform-origin:0 50%;color:#000;">28.04.2017</div>
<div class="t" style="left:302.0999999999999px;top:369.9px;line-height:15px;font:normal normal 12px 'Liberation Sans', sans-serif;transform:scaleX(0.9000);transform-origin:0 50%;color:#000;">28.04.2017</div>
<div class="t" style="left:414px;top:369.9px;line-height:15px;font:normal normal 12px 'Liberation Sans', sans-serif;transform:scaleX(0.9000);transform-origin:0 50%;color:#000;">594* 420</div>
<div class="t" style="left:487.79999999999995px;top:369.9px;line-height:15px;font:normal normal 12px 'Liberation Sans', sans-serif;transform:scaleX(0.8562);transform-origin:0 50%;color:#000;">G</div>
<div class="t" style="left:521.3px;top:369.9px;line-height:15px;font:normal normal 12px 'Liberation Sans', sans-serif;transform:scaleX(0.9493);transform-origin:0 50%;color:#000;">[56]</div>
<div class="t" style="left:236.29999999999995px;top:388.9px;line-height:15px;font:normal normal 12px 'Liberation Sans', sans-serif;transform:scaleX(0.9000);transform-origin:0 50%;color:#000;">28.04.2017</div>
<div class="t" style="left:302.0999999999999px;top:388.9px;line-height:15px;font:normal normal 12px 'Liberation Sans', sans-serif;transform:scaleX(0.9000);transform-origin:0 50%;color:#000;">28.04.2017</div>
<div class="t" style="left:414px;top:388.9px;line-height:15px;font:normal normal 12px 'Liberation Sans', sans-serif;transform:scaleX(0.9000);transform-origin:0 50%;color:#000;">148* 105</div>
<div class="t" style="left:487.79999999999995px;top:388.9px;line-height:15px;font:normal normal 12px 'Liberation Sans', sans-serif;transform:scaleX(0.9710);transform-origin:0 50%;color:#000;">W</div>
<div class="t" style="left:521.3px;top:388.9px;line-height:15px;font:normal normal 12px 'Liberation Sans', sans-serif;transform:scaleX(0.9288);transform-origin:0 50%;color:#000;">[6838]</div>
<div class="t" style="left:708px;top:388.9px;line-height:15px;font:normal normal 12px 'Liberation Sans', sans-serif;transform:scaleX(1.0348);transform-origin:0 50%;color:#000;">КМД</div>
<div class="t" style="left:236.29999999999995px;top:407.9px;line-height:15px;font:normal normal 12px 'Liberation Sans', sans-serif;transform:scaleX(0.9000);transform-origin:0 50%;color:#000;">28.04.2017</div>
<div class="t" style="left:302.0999999999999px;top:407.9px;line-height:15px;font:normal normal 12px 'Liberation Sans', sans-serif;transform:scaleX(0.9000);transform-origin:0 50%;color:#000;">28.04.2017</div>
<div class="t" style="left:414px;top:407.9px;line-height:15px;font:normal normal 12px 'Liberation Sans', sans-serif;transform:scaleX(0.9000);transform-origin:0 50%;color:#000;">148* 105</div>
<div class="t" style="left:487.79999999999995px;top:407.9px;line-height:15px;font:normal normal 12px 'Liberation Sans', sans-serif;transform:scaleX(0.9710);transform-origin:0 50%;color:#000;">W</div>
<div class="t" style="left:521.3px;top:407.9px;line-height:15px;font:normal normal 12px 'Liberation Sans', sans-serif;transform:scaleX(0.9288);transform-origin:0 50%;color:#000;">[6839]</div>
<div class="t" style="left:708px;top:407.9px;line-height:15px;font:normal normal 12px 'Liberation Sans', sans-serif;transform:scaleX(1.0348);transform-origin:0 50%;color:#000;">КМД</div>
<div style="position:absolute;left:0px;top:419px;width:862px;height:15px;background:#f0f0f0"></div>
<div style="position:absolute;left:18px;top:419px;width:207px;height:15px;background:#cdcdcd"></div>
<svg style="left:6.2999999999999545px;top:422.1px" width="6" height="9" viewBox="0 0 6 9"><path d="M4.6 0.8 L1.2 4.5 L4.6 8.2" fill="none" stroke="#606060" stroke-width="1.9"/></svg>
<svg style="left:849.9000000000001px;top:422.1px" width="6" height="9" viewBox="0 0 6 9"><path d="M1.2 0.8 L4.6 4.5 L1.2 8.2" fill="none" stroke="#606060" stroke-width="1.9"/></svg>
<div style="position:absolute;left:862px;top:0px;width:17px;height:419px;background:#f0f0f0"></div>
<div style="position:absolute;left:862px;top:419px;width:17px;height:15px;background:#f0f0f0"></div>
<div style="position:absolute;left:862px;top:18px;width:15px;height:17px;background:#cdcdcd"></div>
<svg style="left:864.9000000000001px;top:6.800000000000011px" width="9" height="6" viewBox="0 0 9 6"><path d="M0.8 4.6 L4.5 1.2 L8.2 4.6" fill="none" stroke="#606060" stroke-width="1.9"/></svg>
<svg style="left:864.7px;top:407px" width="9" height="6" viewBox="0 0 9 6"><path d="M0.8 1.2 L4.5 4.6 L8.2 1.2" fill="none" stroke="#606060" stroke-width="1.9"/></svg></div>
<div class="btn" style="left:950px;top:714px;width:65px;height:23px"></div>
<div class="t" style="left:960px;top:718.9px;line-height:15px;font:normal normal 12px 'Liberation Sans', sans-serif;transform:scaleX(0.9758);transform-origin:0 50%;color:#000;">Открыть</div>
<div class="btn" style="left:1021px;top:714px;width:130px;height:23px"></div>
<div class="t" style="left:1026px;top:718.9px;line-height:15px;font:normal normal 12px 'Liberation Sans', sans-serif;transform:scaleX(0.9840);transform-origin:0 50%;color:#000;">Открыть предыдущий</div>
<div class="btn" style="left:1157px;top:714px;width:124px;height:23px"></div>
<div class="t" style="left:1161.7px;top:718.9px;line-height:15px;font:normal normal 12px 'Liberation Sans', sans-serif;transform:scaleX(0.9986);transform-origin:0 50%;color:#000;">Открыть следующий</div>
<div class="btn" style="left:1293px;top:714px;width:64px;height:23px"></div>
<div class="t" style="left:1303.8px;top:718.9px;line-height:15px;font:normal normal 12px 'Liberation Sans', sans-serif;transform:scaleX(1.0189);transform-origin:0 50%;color:#000;">Снимки</div>
<div class="t" style="left:1365px;top:718.9px;line-height:15px;font:normal normal 12px 'Liberation Sans', sans-serif;transform:scaleX(0.9743);transform-origin:0 50%;color:#000;">4218 найдены чертежи, 1 выбрано</div>
<div class="grp" style="left:1846px;top:270px;width:120px;height:66px"></div><div style="position:absolute;left:1851px;top:268px;width:46px;height:4px;background:#f0f0f0"></div>
<div class="t" style="left:1854.3px;top:262.6px;line-height:15px;font:normal normal 12px 'Liberation Sans', sans-serif;transform:scaleX(0.9922);transform-origin:0 50%;color:#000;">Фильтр</div>
<div class="btn" style="left:1849px;top:280px;width:110px;height:22px"></div>
<div class="t" style="left:1854.3px;top:283.9px;line-height:15px;font:normal normal 12px 'Liberation Sans', sans-serif;transform:scaleX(0.9806);transform-origin:0 50%;color:#000;">Отображение</div>
<div class="btn" style="left:1849px;top:309px;width:110px;height:22px"></div>
<div class="t" style="left:1880px;top:312.9px;line-height:15px;font:normal normal 12px 'Liberation Sans', sans-serif;transform:scaleX(0.9767);transform-origin:0 50%;color:#000;">Выбрать</div>
<div class="grp" style="left:1846px;top:348px;width:120px;height:37px"></div><div style="position:absolute;left:1851px;top:346px;width:48px;height:4px;background:#f0f0f0"></div>
<div class="t" style="left:1854.3px;top:340.9px;line-height:15px;font:normal normal 12px 'Liberation Sans', sans-serif;transform:scaleX(0.9750);transform-origin:0 50%;color:#000;">Модель</div>
<div class="btn" style="left:1849px;top:358px;width:110px;height:22px"></div>
<div class="t" style="left:1886.4px;top:361.4px;line-height:15px;font:normal normal 12px 'Liberation Sans', sans-serif;transform:scaleX(0.9805);transform-origin:0 50%;color:#000;">Выбрать</div>
<div class="grp" style="left:1846px;top:397px;width:120px;height:37px"></div><div style="position:absolute;left:1851px;top:395px;width:74px;height:4px;background:#f0f0f0"></div>
<div class="t" style="left:1854.3px;top:389.9px;line-height:15px;font:normal normal 12px 'Liberation Sans', sans-serif;transform:scaleX(0.9544);transform-origin:0 50%;color:#000;">Блокировать</div>
<div class="btn" style="left:1849px;top:407px;width:110px;height:22px"></div>
<div class="grp" style="left:1846px;top:446px;width:120px;height:37px"></div><div style="position:absolute;left:1851px;top:444px;width:74.5px;height:4px;background:#f0f0f0"></div>
<div class="t" style="left:1854.3px;top:438.9px;line-height:15px;font:normal normal 12px 'Liberation Sans', sans-serif;transform:scaleX(1.0376);transform-origin:0 50%;color:#000;">Заморозить</div>
<div class="btn" style="left:1849px;top:456px;width:110px;height:22px"></div>
<div class="grp" style="left:1846px;top:494px;width:120px;height:37px"></div><div style="position:absolute;left:1851px;top:492px;width:90px;height:4px;background:#f0f0f0"></div>
<div class="t" style="left:1854.3px;top:487.4px;line-height:15px;font:normal normal 12px 'Liberation Sans', sans-serif;transform:scaleX(1.0705);transform-origin:0 50%;color:#000;">Опубликовать</div>
<div class="btn" style="left:1849px;top:504px;width:110px;height:22px"></div>
<div class="grp" style="left:1846px;top:544px;width:120px;height:37px"></div><div style="position:absolute;left:1851px;top:542px;width:56px;height:4px;background:#f0f0f0"></div>
<div class="t" style="left:1854.3px;top:536.9px;line-height:15px;font:normal normal 12px 'Liberation Sans', sans-serif;transform:scaleX(0.9453);transform-origin:0 50%;color:#000;">Редакция</div>
<div class="btn" style="left:1849px;top:554px;width:110px;height:22px"></div>
<div style="position:absolute;left:27px;top:953px;width:1874px;height:17px;background:#f0f0f0"></div>
<div style="position:absolute;left:1901px;top:953px;width:15px;height:17px;background:#f0f0f0"></div>
<div style="position:absolute;left:44px;top:954px;width:1794px;height:15px;background:#cdcdcd"></div>
<svg style="left:32.1px;top:957.0px" width="6" height="9" viewBox="0 0 6 9"><path d="M4.6 0.8 L1.2 4.5 L4.6 8.2" fill="none" stroke="#606060" stroke-width="1.9"/></svg>
<svg style="left:1889.9px;top:957.0px" width="6" height="9" viewBox="0 0 6 9"><path d="M1.2 0.8 L4.6 4.5 L1.2 8.2" fill="none" stroke="#606060" stroke-width="1.9"/></svg>
<div style="position:absolute;left:26px;top:76px;width:1px;height:894px;background:#3c3c3c"></div>
<div style="position:absolute;left:0px;top:970px;width:1916px;height:27px;background:#f5f6f7"></div>
<div style="position:absolute;left:0px;top:970px;width:836px;height:27px;background:#f0f0f0"></div>
<div class="grip" style="left:3px;top:975px;height:19px"></div>
<div style="position:absolute;left:8px;top:973px;width:23px;height:22px;box-sizing:border-box;background:#b9d6f2;border:1px solid #62a2e4"></div>
<svg style="left:12px;top:976px" width="16" height="15" viewBox="0 0 16 15"><rect x=".7" y=".7" width="14.6" height="13.6" fill="none" stroke="#1450b4" stroke-width="1.15" stroke-dasharray="2.6 1.6"/><path d="M4 1.5V12.5L6.8 10L9 14.5L10.8 13.6L8.6 9.2H12Z" fill="#1c5ed6" stroke="#0e3a9a" stroke-width=".6"/></svg>
<div style="position:absolute;left:31px;top:973px;width:23px;height:22px;box-sizing:border-box;background:#b9d6f2;border:1px solid #62a2e4"></div>
<svg style="left:35px;top:976px" width="16" height="15" viewBox="0 0 16 15"><rect x=".7" y=".7" width="14.6" height="13.6" fill="none" stroke="#1450b4" stroke-width="1.15" stroke-dasharray="2.6 1.6"/><path d="M3 13C4 8 7 4.5 12.5 3.5" stroke="#1450b4" stroke-width="1.2" fill="none"/></svg>
<div style="position:absolute;left:54px;top:973px;width:23px;height:22px;box-sizing:border-box;background:#b9d6f2;border:1px solid #62a2e4"></div>
<svg style="left:58px;top:976px" width="16" height="15" viewBox="0 0 16 15"><rect x=".7" y=".7" width="14.6" height="13.6" fill="none" stroke="#1450b4" stroke-width="1.15" stroke-dasharray="2.6 1.6"/><text x="4.5" y="12" style="font:13px 'Liberation Sans',sans-serif" fill="#16357a">a</text></svg>
<div style="position:absolute;left:77px;top:973px;width:23px;height:22px;box-sizing:border-box;background:#b9d6f2;border:1px solid #62a2e4"></div>
<svg style="left:81px;top:976px" width="16" height="15" viewBox="0 0 16 15"><rect x=".7" y=".7" width="14.6" height="13.6" fill="none" stroke="#1450b4" stroke-width="1.15" stroke-dasharray="2.6 1.6"/><path d="M2.5 11.5L7 6.5H13" stroke="#1450b4" stroke-width="1.2" fill="none"/></svg>
<div style="position:absolute;left:100px;top:973px;width:23px;height:22px;box-sizing:border-box;background:#b9d6f2;border:1px solid #62a2e4"></div>
<svg style="left:104px;top:976px" width="16" height="15" viewBox="0 0 16 15"><rect x=".7" y=".7" width="14.6" height="13.6" fill="none" stroke="#1450b4" stroke-width="1.15" stroke-dasharray="2.6 1.6"/><rect x="5.5" y="4.5" width="5" height="5.5" fill="#c8b8f0" stroke="#7a68c8"/></svg>
<div style="position:absolute;left:123px;top:973px;width:23px;height:22px;box-sizing:border-box;background:#b9d6f2;border:1px solid #62a2e4"></div>
<svg style="left:127px;top:976px" width="16" height="15" viewBox="0 0 16 15"><rect x=".7" y=".7" width="14.6" height="13.6" fill="none" stroke="#1450b4" stroke-width="1.15" stroke-dasharray="2.6 1.6"/><path d="M7 3H3.5V12.5H7M9 3H12.5M11 1.2L13 3L11 4.8M13 12.5H9.5M11.5 10.7L9.5 12.5L11.5 14.3" stroke="#1450b4" stroke-width="1.4" fill="none"/></svg>
<div style="position:absolute;left:146px;top:973px;width:23px;height:22px;box-sizing:border-box;background:#b9d6f2;border:1px solid #62a2e4"></div>
<svg style="left:150px;top:976px" width="16" height="15" viewBox="0 0 16 15"><rect x=".7" y=".7" width="14.6" height="13.6" fill="none" stroke="#1450b4" stroke-width="1.15" stroke-dasharray="2.6 1.6"/><path d="M6.5 0H9.5V9.5H6.5Z" fill="#a8680c" stroke="#6a3c00" stroke-width=".5"/><path d="M2 14.5C3 9.5 13 9.5 14 14.5Z" fill="#fffef8"/></svg>
<div style="position:absolute;left:169px;top:973px;width:23px;height:22px;box-sizing:border-box;background:#b9d6f2;border:1px solid #62a2e4"></div>
<svg style="left:173px;top:976px" width="16" height="15" viewBox="0 0 16 15"><rect x=".7" y=".7" width="14.6" height="13.6" fill="none" stroke="#1450b4" stroke-width="1.15" stroke-dasharray="2.6 1.6"/><rect x="3.5" y="3.5" width="10" height="8" fill="#fcfcff" stroke="#1c4fc0" stroke-width="1.3"/><path d="M5 11.5H13.5V5" stroke="#9aa8c8" stroke-width="1" fill="none"/></svg>
<div style="position:absolute;left:192px;top:973px;width:23px;height:22px;box-sizing:border-box;background:#b9d6f2;border:1px solid #62a2e4"></div>
<svg style="left:196px;top:976px" width="16" height="15" viewBox="0 0 16 15"><rect x=".7" y=".7" width="14.6" height="13.6" fill="none" stroke="#1450b4" stroke-width="1.15" stroke-dasharray="2.6 1.6"/><path d="M2 4.5H14.5M4.5 2.5V13M8 2.5V13M11.5 2.5V13" stroke="#8c1a8c" stroke-width="1.3" fill="none"/></svg>

<svg style="left:219px;top:976px" width="16" height="15" viewBox="0 0 16 15"><rect x=".7" y=".7" width="14.6" height="13.6" fill="none" stroke="#1450b4" stroke-width="1.15" stroke-dasharray="2.6 1.6"/><path d="M2 4.5H14.5M5 2.5V13M11.5 2.5V13" stroke="#8c1a8c" stroke-width="1.3" fill="none"/></svg>
<div style="position:absolute;left:238px;top:973px;width:23px;height:22px;box-sizing:border-box;background:#b9d6f2;border:1px solid #62a2e4"></div>
<svg style="left:242px;top:976px" width="16" height="15" viewBox="0 0 16 15"><rect x=".7" y=".7" width="14.6" height="13.6" fill="none" stroke="#1450b4" stroke-width="1.15" stroke-dasharray="2.6 1.6"/><path d="M2.5 3L13.5 13M13 2.5L3 13.5M2 8.5H14M8 2V14.5M4 5.5L12 11" stroke="#e8501a" stroke-width="1.4" fill="none"/></svg>

<svg style="left:265px;top:976px" width="16" height="15" viewBox="0 0 16 15"><rect x=".7" y=".7" width="14.6" height="13.6" fill="none" stroke="#1450b4" stroke-width="1.15" stroke-dasharray="2.6 1.6"/><path d="M3 14L13 2" stroke="#2a55e0" stroke-width="1.5"/><path d="M3.5 5L12.5 10.5M2.5 9.5H8M8.5 6H14" stroke="#f08020" stroke-width="1.3"/></svg>
<div style="position:absolute;left:284px;top:973px;width:23px;height:22px;box-sizing:border-box;background:#b9d6f2;border:1px solid #62a2e4"></div>
<svg style="left:288px;top:976px" width="16" height="15" viewBox="0 0 16 15"><rect x=".7" y=".7" width="14.6" height="13.6" fill="none" stroke="#1450b4" stroke-width="1.15" stroke-dasharray="2.6 1.6"/><rect x="2.5" y="1.5" width="11" height="8" fill="#fff" stroke="#1c5ed6" stroke-width="1.2"/><circle cx="9" cy="10" r="4.6" fill="#fff" stroke="#e01010" stroke-width="1.3"/><path d="M5.5 8.7H12.5M5.5 11.5H12.5M7.6 6V14M10.4 6V14" stroke="#108a10" stroke-width="1.3"/></svg>
<div style="position:absolute;left:307px;top:973px;width:23px;height:22px;box-sizing:border-box;background:#b9d6f2;border:1px solid #62a2e4"></div>
<svg style="left:311px;top:976px" width="16" height="15" viewBox="0 0 16 15"><rect x=".7" y=".7" width="14.6" height="13.6" fill="none" stroke="#1450b4" stroke-width="1.15" stroke-dasharray="2.6 1.6"/><path d="M5.5 3.5H11V8L9.5 10V12.5H7V10L5.5 8Z" fill="#9a9a9a" stroke="#505050" stroke-width=".8"/><path d="M6.8 1V3.5M9.7 1V3.5" stroke="#505050" stroke-width="1.2"/><path d="M8.2 12.5C8.2 14.5 6 14 4 14.5" stroke="#505050" stroke-width="1.3" fill="none"/></svg>
<div style="position:absolute;left:331px;top:972px;width:1px;height:24px;background:#c0c0c0"></div>
<div class="grip" style="left:336px;top:975px;height:19px"></div>
<div style="position:absolute;left:345px;top:973px;width:23px;height:22px;box-sizing:border-box;background:#b9d6f2;border:1px solid #62a2e4"></div>
<svg style="left:349px;top:976px" width="16" height="16" viewBox="0 0 16 16"><rect x="1.5" y="1.5" width="12" height="12" fill="#f9b04a" stroke="#f79a28" stroke-width="1.6"/><path d="M2 2L13 13M13 2L2 13" stroke="#e8501a" stroke-width="1.6"/></svg>
<div style="position:absolute;left:368px;top:973px;width:23px;height:22px;box-sizing:border-box;background:#b9d6f2;border:1px solid #62a2e4"></div>
<svg style="left:372px;top:976px" width="16" height="16" viewBox="0 0 16 16"><rect x="4" y="3" width="8" height="8" fill="#cfe0f6" stroke="#f79a28" stroke-width="2"/></svg>
<div style="position:absolute;left:391px;top:973px;width:23px;height:22px;box-sizing:border-box;background:#b9d6f2;border:1px solid #62a2e4"></div>
<svg style="left:395px;top:976px" width="16" height="16" viewBox="0 0 16 16"><circle cx="8" cy="7.5" r="4" fill="none" stroke="#f79a28" stroke-width="1.5"/></svg>
<div style="position:absolute;left:414px;top:973px;width:23px;height:22px;box-sizing:border-box;background:#b9d6f2;border:1px solid #62a2e4"></div>
<svg style="left:418px;top:976px" width="16" height="16" viewBox="0 0 16 16"><path d="M8 3.5L12 11.5H4Z" fill="none" stroke="#f79a28" stroke-width="1.3"/></svg>
<div style="position:absolute;left:437px;top:973px;width:23px;height:22px;box-sizing:border-box;background:#b9d6f2;border:1px solid #62a2e4"></div>
<svg style="left:441px;top:976px" width="16" height="16" viewBox="0 0 16 16"><path d="M4 3.5L12 11.5M12 3.5L4 11.5" stroke="#f79a28" stroke-width="1.6"/></svg>
<div style="position:absolute;left:460px;top:973px;width:23px;height:22px;box-sizing:border-box;background:#b9d6f2;border:1px solid #62a2e4"></div>
<svg style="left:464px;top:976px" width="16" height="16" viewBox="0 0 16 16"><path d="M2.5 13H13V2.5M8.5 13V8.5H13" stroke="#f79a28" stroke-width="1.6" fill="none"/></svg>
<div style="position:absolute;left:483px;top:973px;width:23px;height:22px;box-sizing:border-box;background:#b9d6f2;border:1px solid #62a2e4"></div>
<svg style="left:487px;top:976px" width="16" height="16" viewBox="0 0 16 16"><path d="M5 2.5H11L5 11.5H11Z" fill="none" stroke="#f79a28" stroke-width="1.3"/></svg>
<div style="position:absolute;left:506px;top:973px;width:23px;height:22px;box-sizing:border-box;background:#b9d6f2;border:1px solid #62a2e4"></div>
<svg style="left:510px;top:976px" width="16" height="16" viewBox="0 0 16 16"><path d="M7 3H12.5L7 11.5H12.5Z" fill="none" stroke="#f79a28" stroke-width="1.3"/><path d="M1 7.8H6" stroke="#f79a28" stroke-width="1.2" stroke-dasharray="1.5 1"/></svg>
<div style="position:absolute;left:529px;top:973px;width:23px;height:22px;box-sizing:border-box;background:#b9d6f2;border:1px solid #62a2e4"></div>
<svg style="left:533px;top:976px" width="16" height="16" viewBox="0 0 16 16"><path d="M2 9L6 12.5L11 4.5L14 7.5" stroke="#f79a28" stroke-width="2" fill="none"/></svg>
<div class="sep" style="left:554px;top:975px;height:18px"></div>
<div style="position:absolute;left:560px;top:973px;width:23px;height:22px;box-sizing:border-box;background:#b9d6f2;border:1px solid #62a2e4"></div>
<svg style="left:564px;top:976px" width="16" height="16" viewBox="0 0 16 16"><rect x="2.5" y="2.5" width="11" height="11" fill="#5a78b8"/><path d="M2.5 13.5H13.5V2.5" stroke="#8a8a9a" stroke-width="1.4" fill="none"/><rect x="5.5" y="5.5" width="5" height="5" fill="#f06a10"/><rect x="6.5" y="6.5" width="2" height="2" fill="#f8c020"/></svg>
<div style="position:absolute;left:583px;top:973px;width:23px;height:22px;box-sizing:border-box;background:#b9d6f2;border:1px solid #62a2e4"></div>
<svg style="left:587px;top:976px" width="16" height="16" viewBox="0 0 16 16"><rect x="3" y="3" width="10" height="10" fill="#5a86c8"/><path d="M13 3V13H3Z" fill="#2a58a8"/><g fill="#fff" stroke="#e8501a" stroke-width="1.2"><rect x="1" y="1" width="4" height="4"/><rect x="11" y="1" width="4" height="4"/><rect x="1" y="11" width="4" height="4"/><rect x="11" y="11" width="4" height="4"/></g></svg>
<div class="sep" style="left:608px;top:975px;height:18px"></div>
<div class="inp" style="left:614px;top:973px;width:84px;height:21px;border-color:#adadad"></div><div class="t" style="left:619px;top:977.5px;line-height:15px;font:normal normal 12px 'Liberation Sans', sans-serif;transform:scaleX(1.0323);transform-origin:0 50%;color:#000;">Авто</div><svg style="left:685.1px;top:980.1px" width="9" height="6" viewBox="0 0 9 6"><path d="M0.8 1.2 L4.5 4.6 L8.2 1.2" fill="none" stroke="#505050" stroke-width="1.9"/></svg>
<div class="inp" style="left:700px;top:973px;width:133px;height:21px;border-color:#adadad"></div><div class="t" style="left:705px;top:977.5px;line-height:15px;font:normal normal 12px 'Liberation Sans', sans-serif;transform:scaleX(0.9848);transform-origin:0 50%;color:#000;">Плоскость вида</div><svg style="left:820.1px;top:980.1px" width="9" height="6" viewBox="0 0 9 6"><path d="M0.8 1.2 L4.5 4.6 L8.2 1.2" fill="none" stroke="#505050" stroke-width="1.9"/></svg>
<div style="position:absolute;left:0px;top:997px;width:1916px;height:1px;background:#a0a0a0"></div>
<div style="position:absolute;left:0px;top:998px;width:1916px;height:19px;background:#f0f0f0"></div>
<div class="t" style="left:2.3px;top:1001.6px;line-height:16px;font:normal normal 12.5px 'Liberation Sans', sans-serif;transform:scaleX(0.9514);transform-origin:0 50%;color:#000;">Выбор пересечением: неактивный</div>
<div style="position:absolute;left:1370px;top:1000px;width:1px;height:16px;background:#c4c4c4"></div>
<div style="position:absolute;left:1467px;top:1000px;width:1px;height:16px;background:#c4c4c4"></div>
<div style="position:absolute;left:1518px;top:1000px;width:1px;height:16px;background:#c4c4c4"></div>
<div style="position:absolute;left:1748px;top:1000px;width:1px;height:16px;background:#c4c4c4"></div>
<div class="t" style="left:1384.5px;top:1001.6px;line-height:16px;font:normal normal 12.5px 'Liberation Sans', sans-serif;transform:scaleX(0.7191);transform-origin:0 50%;color:#000;">S</div>
<div class="t" style="left:1432.5px;top:1001.6px;line-height:16px;font:normal normal 12.5px 'Liberation Sans', sans-serif;transform:scaleX(1.0067);transform-origin:0 50%;color:#000;">0</div>
<div style="position:absolute;left:1471px;top:998px;width:46.5px;height:19px;overflow:hidden"><div class="t" style="left:0px;top:3.6px;line-height:16px;font:normal normal 12.5px 'Liberation Sans', sans-serif;transform:scaleX(0.9300);transform-origin:0 50%;color:#000;">Панорамирование</div></div>
<div class="t" style="left:1523px;top:1001.6px;line-height:16px;font:normal normal 12.5px 'Liberation Sans', sans-serif;transform:scaleX(0.9165);transform-origin:0 50%;color:#000;">Текущая стадия: 0, Стадия 0</div>
<div class="t" style="left:1751.5px;top:1001.6px;line-height:16px;font:normal normal 12.5px 'Liberation Sans', sans-serif;transform:scaleX(0.9413);transform-origin:0 50%;color:#000;">0 + 0 выбрано объектов:</div>
<div style="position:absolute;left:0px;top:1017px;width:1916px;height:4px;background:linear-gradient(90deg,#8b8171,#a09584 10%,#786e60 25%,#9b907f 40%,#85796a 55%,#a39887 70%,#7d7365 85%,#968b7a)"></div>
<div style="position:absolute;left:113px;top:1018px;width:59px;height:3px;box-sizing:border-box;border:1px solid rgba(225,220,210,.7);border-bottom:none;background:rgba(200,195,185,.35)"></div>
<div style="position:absolute;left:175px;top:1018px;width:59px;height:3px;box-sizing:border-box;border:1px solid rgba(225,220,210,.7);border-bottom:none;background:rgba(200,195,185,.35)"></div>
<div style="position:absolute;left:362px;top:1018px;width:58px;height:3px;box-sizing:border-box;border:1px solid rgba(225,220,210,.7);border-bottom:none;background:rgba(200,195,185,.35)"></div>
<div style="position:absolute;left:423px;top:1018px;width:59px;height:3px;box-sizing:border-box;border:1px solid rgba(225,220,210,.7);border-bottom:none;background:rgba(200,195,185,.35)"></div>
<div style="position:absolute;left:485px;top:1018px;width:59px;height:3px;box-sizing:border-box;border:1px solid rgba(225,220,210,.7);border-bottom:none;background:rgba(200,195,185,.35)"></div>
<div style="position:absolute;left:547px;top:1018px;width:58px;height:3px;box-sizing:border-box;border:1px solid rgba(225,220,210,.7);border-bottom:none;background:rgba(200,195,185,.35)"></div>
</body></html>
